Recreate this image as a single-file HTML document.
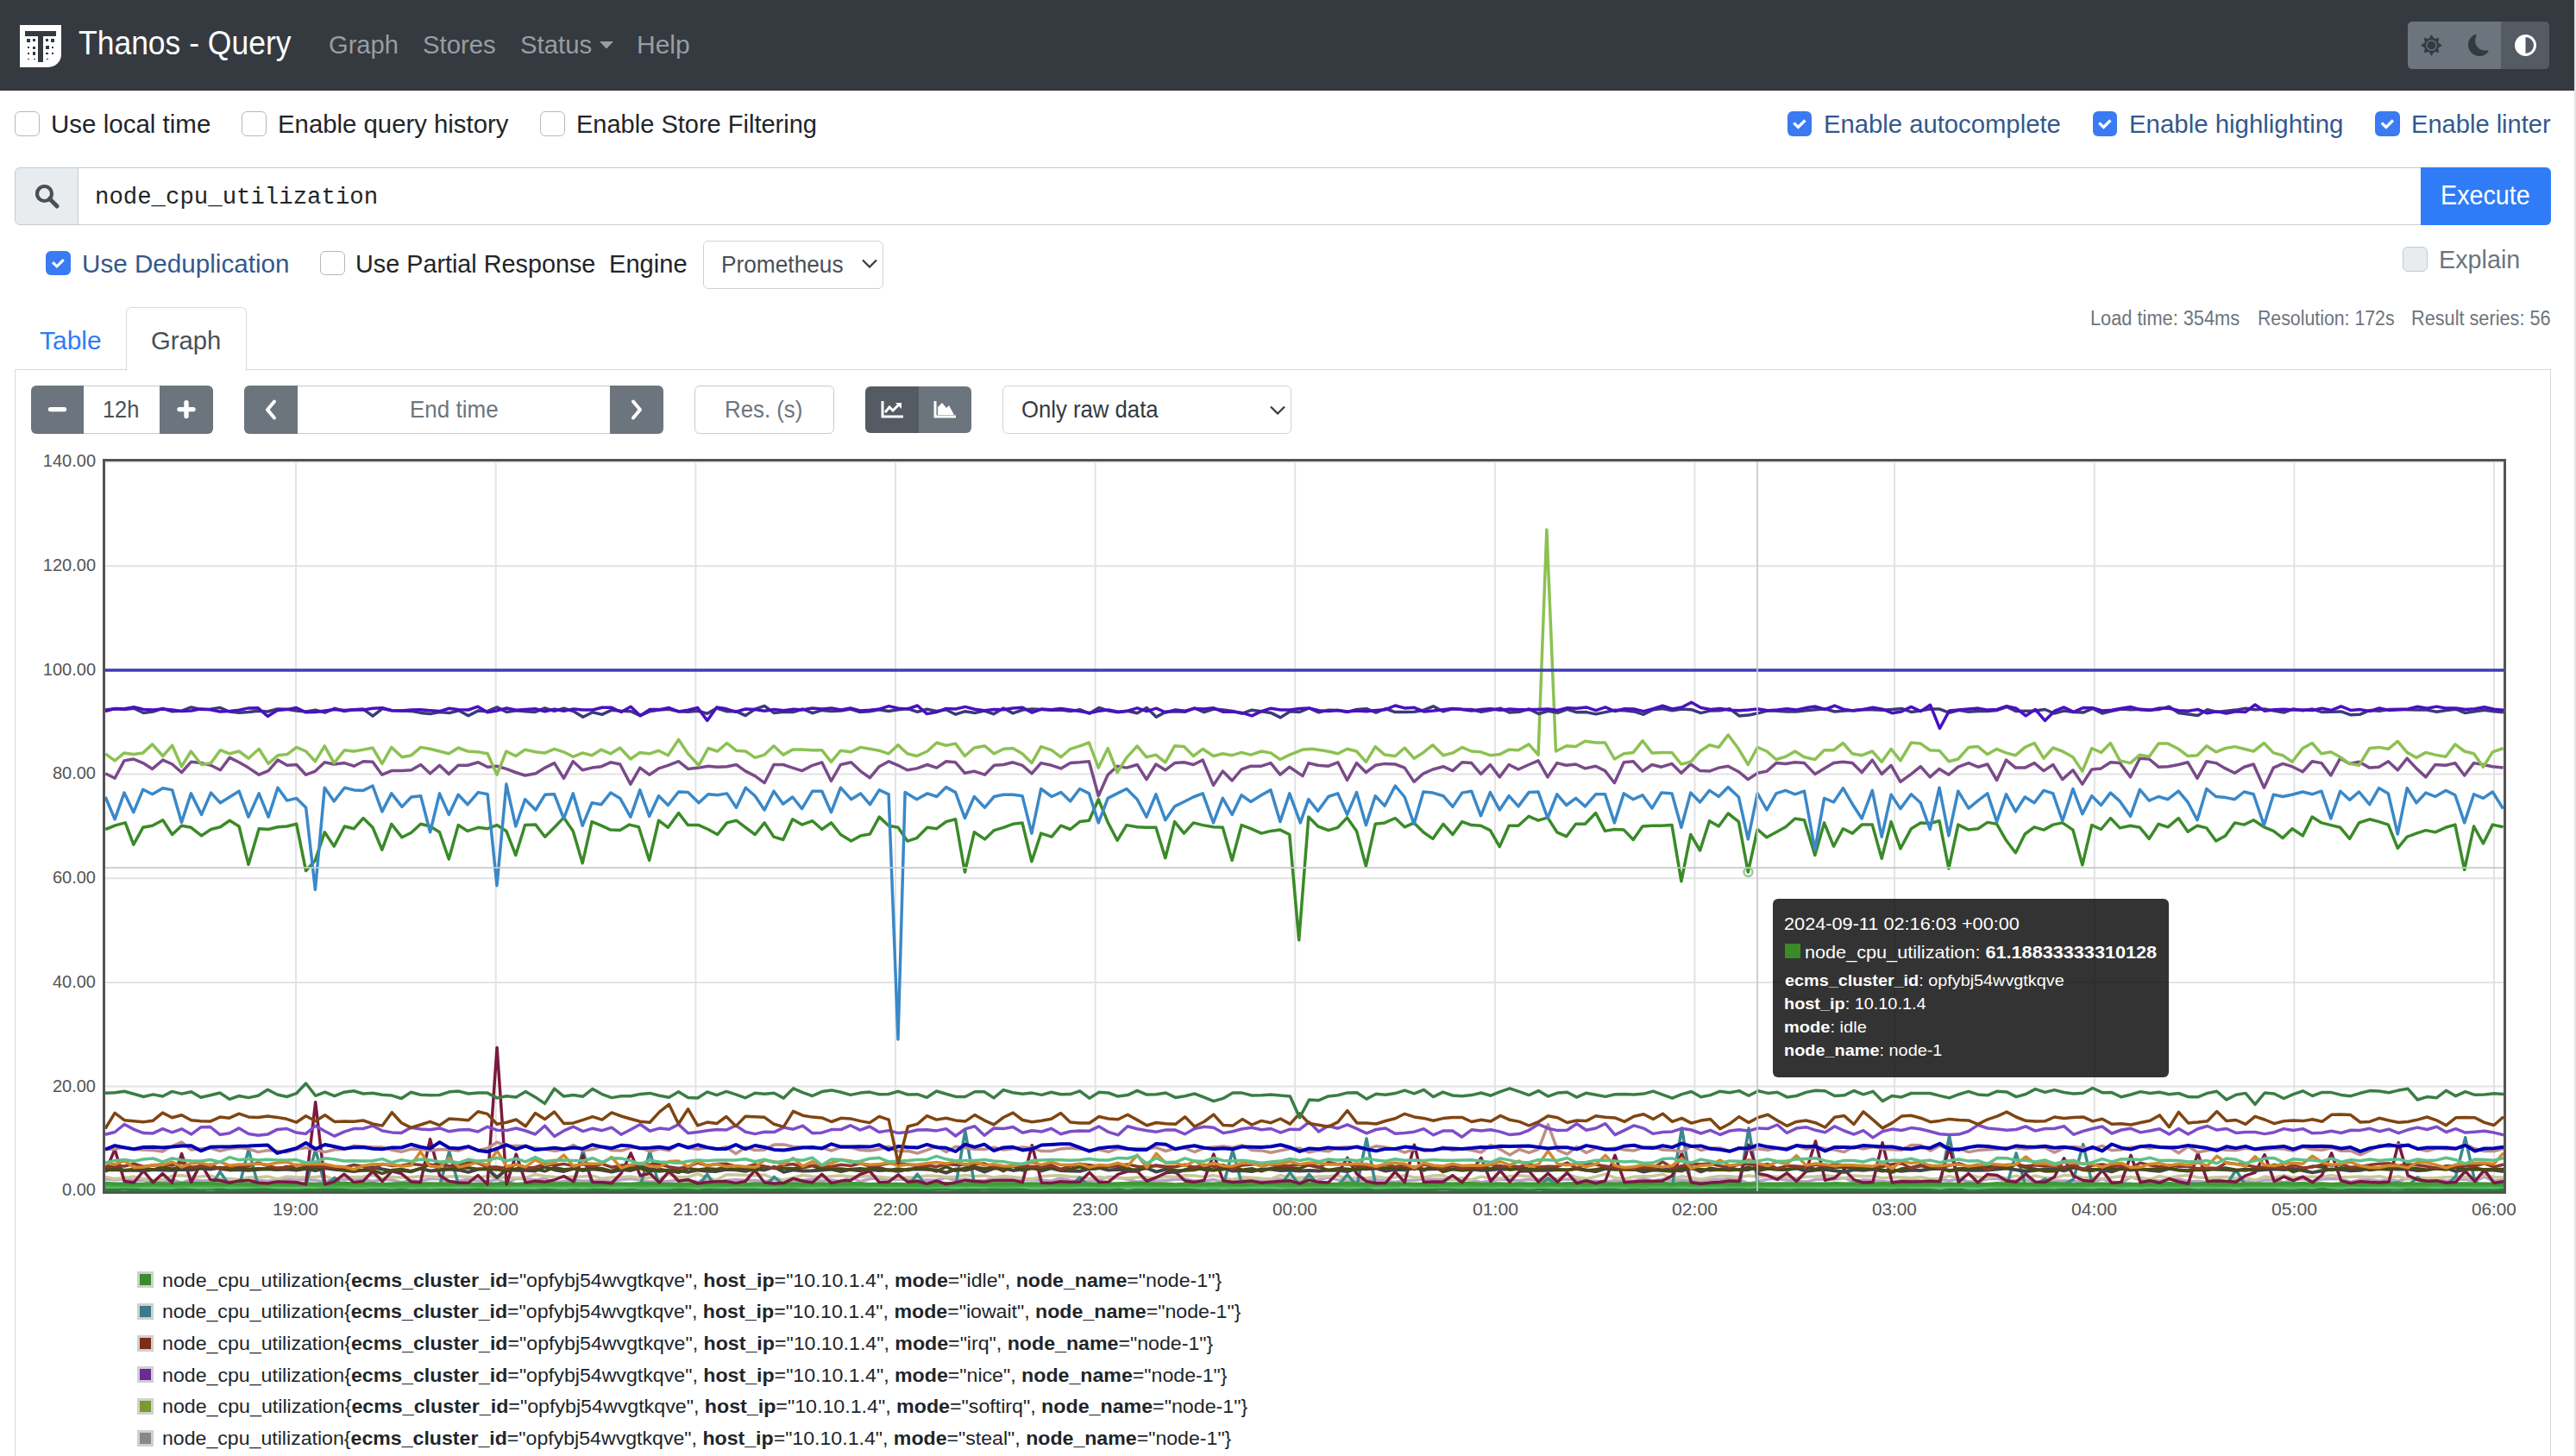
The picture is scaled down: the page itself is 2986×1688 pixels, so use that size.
<!DOCTYPE html>
<html><head><meta charset="utf-8"><style>
html,body{margin:0;padding:0;background:#fff;width:2986px;height:1688px;overflow:hidden;position:relative;font-family:'Liberation Sans', sans-serif}
</style></head><body>
<div style="position:absolute;left:2984px;top:0px;width:2px;height:1688px;box-sizing:border-box;background:#e4e4e4"></div><div style="position:absolute;left:0px;top:0px;width:2984px;height:105px;box-sizing:border-box;background:#343a40;border-bottom:1px solid #2a2e33"></div><svg style="position:absolute;left:23px;top:29px" width="48" height="49" viewBox="0 0 48 49">
<path d="M0 0H48V34A15 15 0 0 1 33 49H0Z" fill="#fff"/>
<rect x="6" y="7" width="36" height="6" fill="#343a40"/>
<rect x="21" y="13" width="6" height="30" fill="#343a40"/>
<g fill="#343a40">
<rect x="8" y="16" width="4" height="4"/><rect x="15" y="16" width="3" height="3"/>
<rect x="30" y="16" width="3" height="3"/><rect x="36" y="16" width="4" height="4"/>
<rect x="9" y="25" width="2" height="2"/><rect x="15" y="25" width="3" height="3"/>
<rect x="30" y="24" width="4" height="4"/><rect x="37" y="25" width="2" height="2"/>
<rect x="9" y="32" width="2" height="2"/><rect x="15" y="31" width="3" height="4"/>
<rect x="30" y="32" width="3" height="2"/><rect x="37" y="32" width="2" height="2"/>
<rect x="9" y="39" width="2" height="1"/><rect x="16" y="39" width="2" height="1"/><rect x="31" y="39" width="2" height="1"/>
</g></svg><svg style="position:absolute;left:695px;top:48px" width="16" height="9"><path d="M0 0H16L8 8.5Z" fill="#9a9da0"/></svg><div style="position:absolute;left:2791px;top:25px;width:108px;height:55px;box-sizing:border-box;background:#6c757d;border-radius:5px 0 0 5px"></div><div style="position:absolute;left:2899px;top:25px;width:56px;height:55px;box-sizing:border-box;background:#545b62;border-radius:0 5px 5px 0"></div><svg style="position:absolute;left:2806px;top:40px" width="25" height="25" viewBox="-12.5 -12.5 25 25"><g fill="#343a40"><polygon points="0.00,-12.50 3.14,-7.58 8.84,-8.84 7.58,-3.14 12.50,0.00 7.58,3.14 8.84,8.84 3.14,7.58 0.00,12.50 -3.14,7.58 -8.84,8.84 -7.58,3.14 -12.50,0.00 -7.58,-3.14 -8.84,-8.84 -3.14,-7.58"/></g><circle r="6.3" fill="#6c757d"/><circle r="5" fill="#343a40"/></svg><svg style="position:absolute;left:2861px;top:40px" width="25" height="25" viewBox="0 0 25 25"><path transform="scale(1.5625)" d="M6 .278a.77.77 0 0 1 .08.858 7.2 7.2 0 0 0-.878 3.46c0 4.021 3.278 7.277 7.318 7.277q.792-.001 1.533-.16a.79.79 0 0 1 .81.316.73.73 0 0 1-.031.893A8.35 8.35 0 0 1 8.344 16C3.734 16 0 12.286 0 7.71 0 4.266 2.114 1.312 5.124.06A.75.75 0 0 1 6 .278" fill="#343a40"/></svg><svg style="position:absolute;left:2915px;top:40px" width="25" height="25" viewBox="0 0 25 25"><circle cx="12.5" cy="12.5" r="11" fill="none" stroke="#fff" stroke-width="3"/><path d="M12.5 1.5A11 11 0 0 0 12.5 23.5Z" fill="#fff"/></svg><div style="position:absolute;left:17px;top:129px;width:29px;height:29px;box-sizing:border-box;background:#fff;border:1.5px solid #b5b9bd;border-radius:6px"></div><div style="position:absolute;left:280px;top:129px;width:29px;height:29px;box-sizing:border-box;background:#fff;border:1.5px solid #b5b9bd;border-radius:6px"></div><div style="position:absolute;left:626px;top:129px;width:29px;height:29px;box-sizing:border-box;background:#fff;border:1.5px solid #b5b9bd;border-radius:6px"></div><div style="position:absolute;left:2072px;top:129px;width:28px;height:29px;box-sizing:border-box;background:#3a7af2;border-radius:6px"></div><svg style="position:absolute;left:2072px;top:129px" width="28" height="29" viewBox="0 0 28 29"><path d="M9.3 17.5L14.4 22.5 22.4 14.5" transform="translate(-2,-4)" fill="none" stroke="#fff" stroke-width="3.2"/></svg><div style="position:absolute;left:2426px;top:129px;width:28px;height:29px;box-sizing:border-box;background:#3a7af2;border-radius:6px"></div><svg style="position:absolute;left:2426px;top:129px" width="28" height="29" viewBox="0 0 28 29"><path d="M9.3 17.5L14.4 22.5 22.4 14.5" transform="translate(-2,-4)" fill="none" stroke="#fff" stroke-width="3.2"/></svg><div style="position:absolute;left:2753px;top:129px;width:29px;height:29px;box-sizing:border-box;background:#3a7af2;border-radius:6px"></div><svg style="position:absolute;left:2753px;top:129px" width="29" height="29" viewBox="0 0 28 29"><path d="M9.3 17.5L14.4 22.5 22.4 14.5" transform="translate(-2,-4)" fill="none" stroke="#fff" stroke-width="3.2"/></svg><div style="position:absolute;left:17px;top:194px;width:74px;height:67px;box-sizing:border-box;background:#e9ecef;border:1px solid #c8cbce;border-radius:6px 0 0 6px"></div><div style="position:absolute;left:90px;top:194px;width:2718px;height:67px;box-sizing:border-box;background:#fff;border:1px solid #c8cbce;border-left:1px solid #c8cbce;border-right:none"></div><svg style="position:absolute;left:40px;top:213px" width="29" height="29" viewBox="0 0 29 29"><circle cx="11.5" cy="11.5" r="8.5" fill="none" stroke="#495057" stroke-width="4.2"/><path d="M17.5 17.5L26 26" stroke="#495057" stroke-width="5" stroke-linecap="round"/></svg><div style="position:absolute;left:2806px;top:194px;width:151px;height:67px;box-sizing:border-box;background:#2f7cf6;border-radius:0 6px 6px 0"></div><div style="position:absolute;left:53px;top:291px;width:29px;height:28px;box-sizing:border-box;background:#3a7af2;border-radius:6px"></div><svg style="position:absolute;left:53px;top:291px" width="29" height="28" viewBox="0 0 28 29"><path d="M9.3 17.5L14.4 22.5 22.4 14.5" transform="translate(-2,-4)" fill="none" stroke="#fff" stroke-width="3.2"/></svg><div style="position:absolute;left:371px;top:291px;width:29px;height:28px;box-sizing:border-box;background:#fff;border:1.5px solid #b5b9bd;border-radius:6px"></div><div style="position:absolute;left:815px;top:279px;width:209px;height:56px;box-sizing:border-box;background:#fff;border:1px solid #cfd2d5;border-radius:6px"></div><svg style="position:absolute;left:999px;top:300px" width="18" height="11"><path d="M1 1.5L9 9.5 17 1.5" fill="none" stroke="#343a40" stroke-width="2.2"/></svg><div style="position:absolute;left:2785px;top:286px;width:29px;height:29px;box-sizing:border-box;background:#e9ecef;border:1.5px solid #c5c9cd;border-radius:6px"></div><div style="position:absolute;left:17px;top:428px;width:2940px;height:1270px;box-sizing:border-box;border:1px solid #d6d9dc;border-bottom:none;border-radius:0"></div><div style="position:absolute;left:146px;top:356px;width:140px;height:74px;box-sizing:border-box;background:#fff;border:1px solid #d6d9dc;border-bottom:none;border-radius:6px 6px 0 0"></div><div style="position:absolute;left:36px;top:447px;width:62px;height:56px;box-sizing:border-box;background:#6c757d;border-radius:6px 0 0 6px"></div><div style="position:absolute;left:97px;top:447px;width:89px;height:56px;box-sizing:border-box;background:#fff;border:1px solid #c8cbce;border-left:none;border-right:none"></div><div style="position:absolute;left:185px;top:447px;width:62px;height:56px;box-sizing:border-box;background:#6c757d;border-radius:0 6px 6px 0"></div><svg style="position:absolute;left:0;top:440px" width="260" height="70"><path d="M58.5 34.6H74.5M208 34.6H224M216 26.6V42.6" stroke="#fff" stroke-width="5.4" stroke-linecap="round"/></svg><div style="position:absolute;left:283px;top:447px;width:62px;height:56px;box-sizing:border-box;background:#6c757d;border-radius:6px 0 0 6px"></div><div style="position:absolute;left:345px;top:447px;width:363px;height:56px;box-sizing:border-box;background:#fff;border:1px solid #c8cbce;border-left:none;border-right:none"></div><div style="position:absolute;left:707px;top:447px;width:62px;height:56px;box-sizing:border-box;background:#6c757d;border-radius:0 6px 6px 0"></div><svg style="position:absolute;left:305px;top:462px" width="18" height="26"><path d="M13 3.5L5 13 13 22.5" fill="none" stroke="#fff" stroke-width="4" stroke-linecap="round" stroke-linejoin="round"/></svg><svg style="position:absolute;left:729px;top:462px" width="18" height="26"><path d="M5 3.5L13 13 5 22.5" fill="none" stroke="#fff" stroke-width="4" stroke-linecap="round" stroke-linejoin="round"/></svg><div style="position:absolute;left:805px;top:447px;width:162px;height:56px;box-sizing:border-box;background:#fff;border:1px solid #c8cbce;border-radius:6px"></div><div style="position:absolute;left:1003px;top:448px;width:62px;height:54px;box-sizing:border-box;background:#545b62;border-radius:6px 0 0 6px"></div><div style="position:absolute;left:1065px;top:448px;width:61px;height:54px;box-sizing:border-box;background:#6c757d;border-radius:0 6px 6px 0"></div><svg style="position:absolute;left:1021px;top:465px" width="26" height="20" viewBox="0 0 26 20"><path d="M2 0V18H26" fill="none" stroke="#fff" stroke-width="3"/><path d="M5 13L10 7 14 11 21 4" fill="none" stroke="#fff" stroke-width="3"/><path d="M17 2H24V9Z" fill="#fff"/></svg><svg style="position:absolute;left:1082px;top:465px" width="26" height="20" viewBox="0 0 26 20"><path d="M2 0V18H26" fill="none" stroke="#fff" stroke-width="3"/><path d="M5 16V7L10 2 15 8 18 5 24 16Z" fill="#fff"/></svg><div style="position:absolute;left:1162px;top:447px;width:335px;height:56px;box-sizing:border-box;background:#fff;border:1px solid #cfd2d5;border-radius:6px"></div><svg style="position:absolute;left:1472px;top:470px" width="18" height="11"><path d="M1 1.5L9 9.5 17 1.5" fill="none" stroke="#343a40" stroke-width="2.2"/></svg><svg style="position:absolute;left:0;top:0" width="2986" height="1688" viewBox="0 0 2986 1688"><line x1="122.0" x2="2902.0" y1="1380.3" y2="1380.3" stroke="#e3e3e3" stroke-width="2"/><line x1="122.0" x2="2902.0" y1="1259.6" y2="1259.6" stroke="#e3e3e3" stroke-width="2"/><line x1="122.0" x2="2902.0" y1="1138.9" y2="1138.9" stroke="#e3e3e3" stroke-width="2"/><line x1="122.0" x2="2902.0" y1="1018.3" y2="1018.3" stroke="#e3e3e3" stroke-width="2"/><line x1="122.0" x2="2902.0" y1="897.6" y2="897.6" stroke="#e3e3e3" stroke-width="2"/><line x1="122.0" x2="2902.0" y1="776.9" y2="776.9" stroke="#e3e3e3" stroke-width="2"/><line x1="122.0" x2="2902.0" y1="656.2" y2="656.2" stroke="#e3e3e3" stroke-width="2"/><line x1="122.0" x2="2902.0" y1="535.5" y2="535.5" stroke="#e3e3e3" stroke-width="2"/><line x1="343.1" x2="343.1" y1="535" y2="1381" stroke="#e3e3e3" stroke-width="2"/><line x1="574.7" x2="574.7" y1="535" y2="1381" stroke="#e3e3e3" stroke-width="2"/><line x1="806.4" x2="806.4" y1="535" y2="1381" stroke="#e3e3e3" stroke-width="2"/><line x1="1038.0" x2="1038.0" y1="535" y2="1381" stroke="#e3e3e3" stroke-width="2"/><line x1="1269.6" x2="1269.6" y1="535" y2="1381" stroke="#e3e3e3" stroke-width="2"/><line x1="1501.2" x2="1501.2" y1="535" y2="1381" stroke="#e3e3e3" stroke-width="2"/><line x1="1732.9" x2="1732.9" y1="535" y2="1381" stroke="#e3e3e3" stroke-width="2"/><line x1="1964.5" x2="1964.5" y1="535" y2="1381" stroke="#e3e3e3" stroke-width="2"/><line x1="2196.1" x2="2196.1" y1="535" y2="1381" stroke="#e3e3e3" stroke-width="2"/><line x1="2427.8" x2="2427.8" y1="535" y2="1381" stroke="#e3e3e3" stroke-width="2"/><line x1="2659.4" x2="2659.4" y1="535" y2="1381" stroke="#e3e3e3" stroke-width="2"/><line x1="2891.0" x2="2891.0" y1="535" y2="1381" stroke="#e3e3e3" stroke-width="2"/><polyline points="122.0,1367.0 133.1,1367.7 144.2,1367.0 155.2,1368.2 166.3,1368.2 177.4,1370.6 188.5,1370.7 199.5,1367.8 210.6,1371.1 221.7,1367.3 232.8,1368.9 243.8,1368.8 254.9,1369.8 266.0,1368.9 277.1,1369.3 288.1,1368.5 299.2,1368.6 310.3,1369.2 321.4,1368.6 332.4,1367.2 343.5,1368.3 354.6,1367.3 365.7,1368.2 376.7,1370.5 387.8,1366.3 398.9,1367.9 410.0,1366.3 421.0,1367.2 432.1,1369.8 443.2,1367.2 454.3,1368.0 465.3,1370.8 476.4,1368.7 487.5,1369.4 498.6,1366.6 509.6,1367.1 520.7,1371.3 531.8,1368.9 542.9,1367.5 554.0,1368.9 565.0,1370.2 576.1,1367.0 587.2,1371.7 598.3,1366.3 609.3,1366.7 620.4,1368.1 631.5,1366.2 642.6,1371.3 653.6,1369.4 664.7,1368.3 675.8,1369.3 686.9,1369.0 697.9,1368.7 709.0,1369.5 720.1,1367.5 731.2,1366.4 742.2,1368.0 753.3,1370.0 764.4,1369.9 775.5,1369.3 786.5,1368.4 797.6,1368.3 808.7,1370.4 819.8,1366.0 830.8,1370.9 841.9,1368.4 853.0,1367.8 864.1,1368.3 875.1,1368.5 886.2,1370.0 897.3,1367.2 908.4,1368.2 919.5,1369.9 930.5,1368.2 941.6,1367.3 952.7,1369.3 963.8,1367.9 974.8,1369.7 985.9,1364.3 997.0,1369.7 1008.1,1366.8 1019.1,1365.9 1030.2,1367.2 1041.3,1367.3 1052.4,1367.0 1063.4,1369.3 1074.5,1368.1 1085.6,1368.2 1096.7,1365.3 1107.7,1368.5 1118.8,1366.9 1129.9,1368.5 1141.0,1369.0 1152.0,1366.1 1163.1,1366.3 1174.2,1367.6 1185.3,1367.7 1196.3,1367.4 1207.4,1368.2 1218.5,1369.3 1229.6,1366.0 1240.6,1368.4 1251.7,1370.0 1262.8,1369.5 1273.9,1368.0 1284.9,1364.4 1296.0,1365.0 1307.1,1367.4 1318.2,1370.2 1329.3,1368.7 1340.3,1369.7 1351.4,1368.6 1362.5,1367.5 1373.6,1367.0 1384.6,1369.1 1395.7,1369.2 1406.8,1367.6 1417.9,1370.5 1428.9,1367.6 1440.0,1368.1 1451.1,1367.2 1462.2,1369.8 1473.2,1367.0 1484.3,1366.9 1495.4,1370.5 1506.5,1369.0 1517.5,1371.7 1528.6,1367.7 1539.7,1365.1 1550.8,1367.9 1561.8,1368.6 1572.9,1369.6 1584.0,1367.6 1595.1,1367.7 1606.1,1368.9 1617.2,1370.4 1628.3,1368.8 1639.4,1368.3 1650.4,1366.8 1661.5,1367.2 1672.6,1367.3 1683.7,1367.4 1694.7,1367.2 1705.8,1368.1 1716.9,1370.8 1728.0,1369.1 1739.1,1367.0 1750.1,1368.1 1761.2,1368.8 1772.3,1367.3 1783.4,1368.3 1794.4,1368.2 1805.5,1367.8 1816.6,1367.1 1827.7,1367.4 1838.7,1369.2 1849.8,1369.2 1860.9,1370.6 1872.0,1368.8 1883.0,1369.7 1894.1,1369.0 1905.2,1366.5 1916.3,1369.1 1927.3,1367.2 1938.4,1368.6 1949.5,1367.9 1960.6,1369.4 1971.6,1369.2 1982.7,1367.0 1993.8,1367.7 2004.9,1366.6 2015.9,1367.5 2027.0,1372.1 2038.1,1369.5 2049.2,1367.1 2060.2,1366.6 2071.3,1367.9 2082.4,1369.3 2093.5,1370.1 2104.5,1367.6 2115.6,1367.0 2126.7,1367.2 2137.8,1365.5 2148.9,1370.1 2159.9,1368.0 2171.0,1368.4 2182.1,1369.4 2193.2,1370.4 2204.2,1368.7 2215.3,1367.2 2226.4,1368.9 2237.5,1369.5 2248.5,1367.1 2259.6,1368.9 2270.7,1366.7 2281.8,1370.0 2292.8,1370.0 2303.9,1366.7 2315.0,1366.3 2326.1,1369.6 2337.1,1368.4 2348.2,1367.5 2359.3,1370.3 2370.4,1369.7 2381.4,1369.1 2392.5,1368.9 2403.6,1369.6 2414.7,1370.2 2425.7,1370.0 2436.8,1366.8 2447.9,1370.0 2459.0,1371.6 2470.0,1364.5 2481.1,1367.8 2492.2,1368.4 2503.3,1369.0 2514.4,1367.5 2525.4,1367.0 2536.5,1369.7 2547.6,1369.5 2558.7,1370.8 2569.7,1366.7 2580.8,1370.2 2591.9,1368.5 2603.0,1369.1 2614.0,1371.0 2625.1,1367.9 2636.2,1367.7 2647.3,1371.0 2658.3,1367.7 2669.4,1366.8 2680.5,1369.4 2691.6,1367.0 2702.6,1366.5 2713.7,1366.8 2724.8,1370.3 2735.9,1368.0 2746.9,1367.8 2758.0,1369.3 2769.1,1368.0 2780.2,1369.3 2791.2,1366.0 2802.3,1368.0 2813.4,1370.2 2824.5,1366.2 2835.5,1369.4 2846.6,1367.4 2857.7,1367.0 2868.8,1369.6 2879.8,1364.1 2890.9,1369.3 2902.0,1367.7" fill="none" stroke="#c09ccc" stroke-width="3.5" stroke-linejoin="round" opacity="1.0"/><polyline points="122.0,1364.4 133.1,1366.8 144.2,1365.5 155.2,1364.1 166.3,1366.4 177.4,1368.2 188.5,1367.3 199.5,1363.3 210.6,1362.8 221.7,1364.2 232.8,1364.1 243.8,1362.9 254.9,1366.9 266.0,1366.5 277.1,1367.6 288.1,1365.0 299.2,1365.0 310.3,1363.9 321.4,1366.9 332.4,1364.1 343.5,1364.7 354.6,1365.0 365.7,1364.6 376.7,1363.5 387.8,1367.6 398.9,1364.1 410.0,1364.7 421.0,1364.2 432.1,1362.2 443.2,1366.4 454.3,1364.6 465.3,1365.0 476.4,1364.7 487.5,1363.7 498.6,1363.9 509.6,1365.0 520.7,1363.9 531.8,1363.8 542.9,1364.4 554.0,1365.6 565.0,1363.3 576.1,1364.7 587.2,1365.2 598.3,1365.4 609.3,1365.4 620.4,1361.7 631.5,1363.5 642.6,1364.6 653.6,1364.9 664.7,1364.2 675.8,1364.1 686.9,1363.2 697.9,1366.6 709.0,1364.9 720.1,1365.1 731.2,1363.9 742.2,1365.9 753.3,1365.1 764.4,1366.9 775.5,1361.3 786.5,1364.8 797.6,1364.7 808.7,1360.8 819.8,1365.7 830.8,1367.9 841.9,1361.9 853.0,1361.9 864.1,1362.5 875.1,1363.1 886.2,1362.0 897.3,1366.3 908.4,1368.0 919.5,1365.3 930.5,1362.5 941.6,1363.9 952.7,1364.9 963.8,1363.8 974.8,1362.8 985.9,1364.3 997.0,1364.2 1008.1,1363.2 1019.1,1364.5 1030.2,1365.6 1041.3,1366.0 1052.4,1364.9 1063.4,1364.8 1074.5,1363.0 1085.6,1363.5 1096.7,1364.5 1107.7,1364.4 1118.8,1362.6 1129.9,1363.8 1141.0,1362.9 1152.0,1365.1 1163.1,1363.6 1174.2,1364.6 1185.3,1365.7 1196.3,1367.0 1207.4,1364.1 1218.5,1363.0 1229.6,1362.8 1240.6,1364.2 1251.7,1364.5 1262.8,1366.4 1273.9,1364.4 1284.9,1365.7 1296.0,1365.5 1307.1,1366.1 1318.2,1365.1 1329.3,1365.0 1340.3,1366.6 1351.4,1364.0 1362.5,1364.4 1373.6,1362.7 1384.6,1363.1 1395.7,1364.4 1406.8,1362.6 1417.9,1365.4 1428.9,1367.7 1440.0,1364.7 1451.1,1365.2 1462.2,1366.3 1473.2,1366.8 1484.3,1362.4 1495.4,1366.2 1506.5,1365.3 1517.5,1365.2 1528.6,1364.0 1539.7,1363.9 1550.8,1362.7 1561.8,1367.1 1572.9,1365.2 1584.0,1366.0 1595.1,1364.1 1606.1,1365.7 1617.2,1365.0 1628.3,1362.5 1639.4,1365.1 1650.4,1365.2 1661.5,1362.9 1672.6,1362.6 1683.7,1367.7 1694.7,1365.6 1705.8,1367.6 1716.9,1364.1 1728.0,1366.0 1739.1,1366.1 1750.1,1363.8 1761.2,1362.7 1772.3,1364.0 1783.4,1367.1 1794.4,1365.5 1805.5,1366.8 1816.6,1361.1 1827.7,1364.8 1838.7,1366.6 1849.8,1364.1 1860.9,1361.1 1872.0,1365.5 1883.0,1366.6 1894.1,1364.3 1905.2,1363.7 1916.3,1363.5 1927.3,1361.4 1938.4,1366.8 1949.5,1363.8 1960.6,1365.6 1971.6,1367.2 1982.7,1364.9 1993.8,1363.6 2004.9,1363.8 2015.9,1364.8 2027.0,1363.1 2038.1,1364.6 2049.2,1363.3 2060.2,1364.4 2071.3,1364.5 2082.4,1366.1 2093.5,1364.2 2104.5,1364.1 2115.6,1362.7 2126.7,1364.0 2137.8,1366.1 2148.9,1362.9 2159.9,1363.7 2171.0,1363.7 2182.1,1365.9 2193.2,1365.1 2204.2,1365.0 2215.3,1365.7 2226.4,1364.6 2237.5,1366.8 2248.5,1366.6 2259.6,1363.4 2270.7,1366.5 2281.8,1361.8 2292.8,1364.7 2303.9,1365.8 2315.0,1363.4 2326.1,1366.3 2337.1,1363.1 2348.2,1366.4 2359.3,1363.0 2370.4,1365.6 2381.4,1366.0 2392.5,1362.6 2403.6,1363.0 2414.7,1365.4 2425.7,1365.0 2436.8,1366.6 2447.9,1365.1 2459.0,1363.7 2470.0,1365.3 2481.1,1365.2 2492.2,1367.1 2503.3,1363.8 2514.4,1365.8 2525.4,1363.5 2536.5,1362.6 2547.6,1365.0 2558.7,1365.6 2569.7,1364.9 2580.8,1364.6 2591.9,1366.1 2603.0,1365.4 2614.0,1368.3 2625.1,1364.1 2636.2,1365.5 2647.3,1362.6 2658.3,1365.6 2669.4,1364.4 2680.5,1364.2 2691.6,1364.6 2702.6,1362.6 2713.7,1364.8 2724.8,1364.6 2735.9,1364.1 2746.9,1364.8 2758.0,1363.7 2769.1,1366.1 2780.2,1363.8 2791.2,1367.2 2802.3,1365.1 2813.4,1366.0 2824.5,1365.6 2835.5,1364.7 2846.6,1364.6 2857.7,1364.3 2868.8,1366.8 2879.8,1362.2 2890.9,1364.7 2902.0,1365.1" fill="none" stroke="#c8c89a" stroke-width="3.5" stroke-linejoin="round" opacity="1.0"/><polyline points="122.0,1372.9 133.1,1373.6 144.2,1374.6 155.2,1376.5 166.3,1375.2 177.4,1376.9 188.5,1374.4 199.5,1375.2 210.6,1375.4 221.7,1374.1 232.8,1374.9 243.8,1375.9 254.9,1358.6 266.0,1374.1 277.1,1376.0 288.1,1332.6 299.2,1374.4 310.3,1375.7 321.4,1376.2 332.4,1372.3 343.5,1372.8 354.6,1374.3 365.7,1332.6 376.7,1374.5 387.8,1365.4 398.9,1376.3 410.0,1375.3 421.0,1376.5 432.1,1372.1 443.2,1375.8 454.3,1373.0 465.3,1375.0 476.4,1376.7 487.5,1373.4 498.6,1375.1 509.6,1374.8 520.7,1335.0 531.8,1374.8 542.9,1375.6 554.0,1374.7 565.0,1375.6 576.1,1376.2 587.2,1370.7 598.3,1375.6 609.3,1374.1 620.4,1374.5 631.5,1375.1 642.6,1375.4 653.6,1376.7 664.7,1374.0 675.8,1333.8 686.9,1374.8 697.9,1374.6 709.0,1376.0 720.1,1374.1 731.2,1375.4 742.2,1375.0 753.3,1335.0 764.4,1376.1 775.5,1376.1 786.5,1374.2 797.6,1374.3 808.7,1375.2 819.8,1361.4 830.8,1377.1 841.9,1376.0 853.0,1374.5 864.1,1378.1 875.1,1376.1 886.2,1376.3 897.3,1364.4 908.4,1373.5 919.5,1373.7 930.5,1375.4 941.6,1377.8 952.7,1373.9 963.8,1373.6 974.8,1372.8 985.9,1376.4 997.0,1372.7 1008.1,1375.8 1019.1,1376.0 1030.2,1375.3 1041.3,1376.8 1052.4,1375.0 1063.4,1361.2 1074.5,1375.8 1085.6,1374.7 1096.7,1376.2 1107.7,1375.6 1118.8,1310.9 1129.9,1375.2 1141.0,1374.3 1152.0,1373.7 1163.1,1372.9 1174.2,1374.2 1185.3,1373.6 1196.3,1375.9 1207.4,1375.2 1218.5,1375.1 1229.6,1372.1 1240.6,1375.0 1251.7,1365.0 1262.8,1375.2 1273.9,1374.9 1284.9,1373.4 1296.0,1375.7 1307.1,1373.5 1318.2,1373.6 1329.3,1374.6 1340.3,1373.1 1351.4,1374.0 1362.5,1374.7 1373.6,1374.8 1384.6,1374.0 1395.7,1375.4 1406.8,1375.5 1417.9,1374.5 1428.9,1333.8 1440.0,1374.2 1451.1,1374.4 1462.2,1374.6 1473.2,1373.9 1484.3,1373.6 1495.4,1359.5 1506.5,1374.4 1517.5,1361.3 1528.6,1374.1 1539.7,1373.3 1550.8,1375.2 1561.8,1361.5 1572.9,1375.1 1584.0,1320.0 1595.1,1376.3 1606.1,1374.9 1617.2,1376.0 1628.3,1374.9 1639.4,1373.4 1650.4,1377.4 1661.5,1374.3 1672.6,1374.6 1683.7,1374.9 1694.7,1374.2 1705.8,1374.9 1716.9,1374.6 1728.0,1376.1 1739.1,1373.1 1750.1,1375.7 1761.2,1373.9 1772.3,1375.9 1783.4,1375.6 1794.4,1366.0 1805.5,1375.1 1816.6,1376.5 1827.7,1375.1 1838.7,1375.4 1849.8,1373.9 1860.9,1374.5 1872.0,1375.3 1883.0,1376.5 1894.1,1377.0 1905.2,1375.5 1916.3,1374.2 1927.3,1373.4 1938.4,1375.6 1949.5,1307.9 1960.6,1375.8 1971.6,1374.8 1982.7,1373.5 1993.8,1375.1 2004.9,1374.8 2015.9,1377.7 2027.0,1307.9 2038.1,1374.6 2049.2,1374.3 2060.2,1374.1 2071.3,1376.1 2082.4,1373.8 2093.5,1376.1 2104.5,1374.9 2115.6,1372.4 2126.7,1374.4 2137.8,1375.9 2148.9,1375.7 2159.9,1374.8 2171.0,1376.2 2182.1,1374.6 2193.2,1374.6 2204.2,1374.8 2215.3,1376.4 2226.4,1377.0 2237.5,1375.1 2248.5,1375.1 2259.6,1316.9 2270.7,1375.2 2281.8,1375.0 2292.8,1374.3 2303.9,1375.4 2315.0,1373.8 2326.1,1374.8 2337.1,1336.9 2348.2,1375.8 2359.3,1373.3 2370.4,1366.9 2381.4,1376.0 2392.5,1373.3 2403.6,1367.1 2414.7,1326.6 2425.7,1375.2 2436.8,1375.7 2447.9,1375.6 2459.0,1373.1 2470.0,1372.6 2481.1,1376.5 2492.2,1375.6 2503.3,1372.6 2514.4,1376.8 2525.4,1374.7 2536.5,1373.3 2547.6,1374.9 2558.7,1375.6 2569.7,1375.1 2580.8,1373.8 2591.9,1356.5 2603.0,1374.4 2614.0,1374.9 2625.1,1374.1 2636.2,1376.6 2647.3,1374.9 2658.3,1375.9 2669.4,1374.4 2680.5,1375.2 2691.6,1374.5 2702.6,1373.6 2713.7,1376.4 2724.8,1374.7 2735.9,1374.4 2746.9,1375.8 2758.0,1373.3 2769.1,1372.2 2780.2,1371.1 2791.2,1374.9 2802.3,1364.9 2813.4,1375.1 2824.5,1375.6 2835.5,1374.7 2846.6,1363.8 2857.7,1318.8 2868.8,1369.9 2879.8,1377.0 2890.9,1373.5 2902.0,1372.6" fill="none" stroke="#3a8a8a" stroke-width="3.5" stroke-linejoin="round" opacity="1.0"/><polyline points="122.0,1377.9 133.1,1377.9 144.2,1378.1 155.2,1378.7 166.3,1378.2 177.4,1378.6 188.5,1378.1 199.5,1378.6 210.6,1377.8 221.7,1378.0 232.8,1377.4 243.8,1377.9 254.9,1377.9 266.0,1378.3 277.1,1378.4 288.1,1377.6 299.2,1378.1 310.3,1378.0 321.4,1378.1 332.4,1377.9 343.5,1378.8 354.6,1378.9 365.7,1378.0 376.7,1377.3 387.8,1378.9 398.9,1378.5 410.0,1378.1 421.0,1378.4 432.1,1378.3 443.2,1378.3 454.3,1377.8 465.3,1378.2 476.4,1378.1 487.5,1378.7 498.6,1377.9 509.6,1377.5 520.7,1378.0 531.8,1378.3 542.9,1378.7 554.0,1378.0 565.0,1378.0 576.1,1378.3 587.2,1379.1 598.3,1378.5 609.3,1378.6 620.4,1378.6 631.5,1378.1 642.6,1378.6 653.6,1378.3 664.7,1377.7 675.8,1378.5 686.9,1378.2 697.9,1378.0 709.0,1378.5 720.1,1378.8 731.2,1378.1 742.2,1377.9 753.3,1378.9 764.4,1378.3 775.5,1378.4 786.5,1377.7 797.6,1378.8 808.7,1378.3 819.8,1378.8 830.8,1378.6 841.9,1378.2 853.0,1378.4 864.1,1378.3 875.1,1378.5 886.2,1378.8 897.3,1377.9 908.4,1377.7 919.5,1378.2 930.5,1378.4 941.6,1377.7 952.7,1378.0 963.8,1378.1 974.8,1377.9 985.9,1378.6 997.0,1378.6 1008.1,1378.2 1019.1,1378.7 1030.2,1378.2 1041.3,1378.1 1052.4,1378.0 1063.4,1378.0 1074.5,1378.8 1085.6,1378.3 1096.7,1378.1 1107.7,1377.8 1118.8,1377.9 1129.9,1378.3 1141.0,1378.3 1152.0,1378.7 1163.1,1378.4 1174.2,1378.5 1185.3,1378.7 1196.3,1378.3 1207.4,1377.8 1218.5,1377.6 1229.6,1378.1 1240.6,1378.3 1251.7,1378.1 1262.8,1377.9 1273.9,1378.0 1284.9,1378.1 1296.0,1378.3 1307.1,1378.3 1318.2,1377.4 1329.3,1377.8 1340.3,1378.6 1351.4,1377.9 1362.5,1378.5 1373.6,1378.1 1384.6,1378.4 1395.7,1378.1 1406.8,1378.4 1417.9,1378.3 1428.9,1378.0 1440.0,1378.0 1451.1,1378.9 1462.2,1377.8 1473.2,1379.0 1484.3,1378.8 1495.4,1378.4 1506.5,1378.0 1517.5,1378.2 1528.6,1378.4 1539.7,1377.8 1550.8,1378.2 1561.8,1378.2 1572.9,1377.9 1584.0,1378.5 1595.1,1377.4 1606.1,1377.7 1617.2,1378.2 1628.3,1378.2 1639.4,1378.1 1650.4,1377.9 1661.5,1378.0 1672.6,1378.5 1683.7,1378.6 1694.7,1377.8 1705.8,1378.7 1716.9,1378.5 1728.0,1377.8 1739.1,1378.7 1750.1,1378.0 1761.2,1377.8 1772.3,1377.3 1783.4,1377.7 1794.4,1378.1 1805.5,1378.6 1816.6,1377.7 1827.7,1377.7 1838.7,1377.6 1849.8,1377.6 1860.9,1378.2 1872.0,1378.3 1883.0,1378.6 1894.1,1378.0 1905.2,1377.9 1916.3,1378.4 1927.3,1378.1 1938.4,1377.8 1949.5,1377.6 1960.6,1378.5 1971.6,1378.3 1982.7,1378.5 1993.8,1378.6 2004.9,1377.9 2015.9,1377.8 2027.0,1378.3 2038.1,1378.3 2049.2,1378.4 2060.2,1377.5 2071.3,1378.4 2082.4,1378.3 2093.5,1378.5 2104.5,1377.9 2115.6,1378.4 2126.7,1378.9 2137.8,1378.1 2148.9,1378.1 2159.9,1378.3 2171.0,1378.2 2182.1,1378.1 2193.2,1378.0 2204.2,1377.8 2215.3,1377.9 2226.4,1377.8 2237.5,1377.9 2248.5,1378.0 2259.6,1378.2 2270.7,1378.2 2281.8,1378.7 2292.8,1377.8 2303.9,1377.4 2315.0,1378.2 2326.1,1378.5 2337.1,1378.1 2348.2,1378.3 2359.3,1377.8 2370.4,1378.8 2381.4,1377.6 2392.5,1377.7 2403.6,1378.0 2414.7,1379.0 2425.7,1378.3 2436.8,1377.6 2447.9,1378.1 2459.0,1378.5 2470.0,1378.1 2481.1,1378.2 2492.2,1378.6 2503.3,1378.2 2514.4,1377.8 2525.4,1377.8 2536.5,1377.8 2547.6,1378.1 2558.7,1378.4 2569.7,1378.2 2580.8,1377.4 2591.9,1378.0 2603.0,1377.9 2614.0,1378.6 2625.1,1377.8 2636.2,1378.1 2647.3,1377.6 2658.3,1378.3 2669.4,1378.2 2680.5,1378.3 2691.6,1378.4 2702.6,1378.3 2713.7,1378.1 2724.8,1378.2 2735.9,1378.1 2746.9,1377.5 2758.0,1378.0 2769.1,1378.0 2780.2,1378.4 2791.2,1377.5 2802.3,1378.5 2813.4,1379.0 2824.5,1378.1 2835.5,1378.0 2846.6,1378.5 2857.7,1377.7 2868.8,1378.8 2879.8,1378.8 2890.9,1378.2 2902.0,1378.3" fill="none" stroke="#4a7a9a" stroke-width="4" stroke-linejoin="round" opacity="1.0"/><polyline points="122.0,1379.6 133.1,1379.5 144.2,1378.6 155.2,1379.6 166.3,1379.9 177.4,1379.3 188.5,1379.3 199.5,1379.1 210.6,1379.5 221.7,1378.9 232.8,1379.2 243.8,1378.5 254.9,1379.2 266.0,1379.3 277.1,1378.9 288.1,1379.1 299.2,1379.7 310.3,1379.1 321.4,1379.6 332.4,1378.9 343.5,1379.6 354.6,1379.3 365.7,1379.7 376.7,1379.3 387.8,1378.9 398.9,1379.0 410.0,1379.6 421.0,1379.9 432.1,1379.1 443.2,1379.6 454.3,1379.7 465.3,1379.1 476.4,1379.8 487.5,1379.1 498.6,1379.0 509.6,1379.4 520.7,1379.7 531.8,1379.5 542.9,1378.8 554.0,1379.3 565.0,1378.9 576.1,1379.4 587.2,1379.3 598.3,1379.3 609.3,1379.3 620.4,1379.3 631.5,1379.1 642.6,1378.9 653.6,1379.4 664.7,1379.7 675.8,1379.6 686.9,1379.7 697.9,1380.1 709.0,1379.4 720.1,1379.7 731.2,1378.7 742.2,1379.6 753.3,1379.9 764.4,1379.2 775.5,1379.4 786.5,1379.1 797.6,1379.3 808.7,1378.7 819.8,1379.6 830.8,1379.3 841.9,1379.5 853.0,1379.6 864.1,1380.0 875.1,1379.2 886.2,1380.0 897.3,1379.3 908.4,1379.2 919.5,1379.2 930.5,1380.0 941.6,1379.1 952.7,1379.6 963.8,1379.2 974.8,1379.5 985.9,1378.7 997.0,1379.6 1008.1,1379.5 1019.1,1379.3 1030.2,1379.9 1041.3,1379.6 1052.4,1379.5 1063.4,1379.3 1074.5,1379.5 1085.6,1378.7 1096.7,1378.7 1107.7,1378.9 1118.8,1379.4 1129.9,1379.2 1141.0,1378.6 1152.0,1378.7 1163.1,1379.1 1174.2,1379.6 1185.3,1379.0 1196.3,1379.1 1207.4,1379.4 1218.5,1379.4 1229.6,1379.9 1240.6,1379.9 1251.7,1379.8 1262.8,1379.3 1273.9,1379.3 1284.9,1379.6 1296.0,1379.5 1307.1,1378.9 1318.2,1379.8 1329.3,1379.5 1340.3,1379.8 1351.4,1378.7 1362.5,1379.5 1373.6,1378.9 1384.6,1379.1 1395.7,1379.6 1406.8,1379.2 1417.9,1379.3 1428.9,1379.2 1440.0,1379.3 1451.1,1379.2 1462.2,1379.2 1473.2,1379.7 1484.3,1379.1 1495.4,1379.7 1506.5,1379.9 1517.5,1379.5 1528.6,1379.7 1539.7,1379.6 1550.8,1379.8 1561.8,1379.1 1572.9,1379.1 1584.0,1379.6 1595.1,1378.9 1606.1,1379.4 1617.2,1379.7 1628.3,1379.8 1639.4,1379.2 1650.4,1379.4 1661.5,1379.3 1672.6,1378.3 1683.7,1379.0 1694.7,1379.4 1705.8,1379.8 1716.9,1379.5 1728.0,1379.6 1739.1,1379.6 1750.1,1380.3 1761.2,1379.3 1772.3,1379.8 1783.4,1378.6 1794.4,1379.5 1805.5,1379.0 1816.6,1379.3 1827.7,1379.7 1838.7,1379.3 1849.8,1379.5 1860.9,1379.5 1872.0,1379.4 1883.0,1380.1 1894.1,1378.9 1905.2,1379.2 1916.3,1379.4 1927.3,1378.9 1938.4,1379.8 1949.5,1380.3 1960.6,1379.3 1971.6,1379.7 1982.7,1379.4 1993.8,1379.6 2004.9,1379.5 2015.9,1379.8 2027.0,1379.4 2038.1,1379.1 2049.2,1379.3 2060.2,1378.8 2071.3,1379.2 2082.4,1379.2 2093.5,1379.3 2104.5,1379.2 2115.6,1379.5 2126.7,1379.9 2137.8,1379.8 2148.9,1380.1 2159.9,1379.5 2171.0,1379.4 2182.1,1379.2 2193.2,1379.0 2204.2,1379.6 2215.3,1380.2 2226.4,1379.7 2237.5,1379.4 2248.5,1380.1 2259.6,1379.9 2270.7,1379.8 2281.8,1378.7 2292.8,1379.0 2303.9,1379.7 2315.0,1379.6 2326.1,1379.4 2337.1,1379.3 2348.2,1379.3 2359.3,1379.8 2370.4,1379.8 2381.4,1378.9 2392.5,1379.4 2403.6,1379.0 2414.7,1379.4 2425.7,1379.3 2436.8,1379.3 2447.9,1379.5 2459.0,1379.0 2470.0,1379.1 2481.1,1379.4 2492.2,1379.3 2503.3,1378.8 2514.4,1379.7 2525.4,1379.1 2536.5,1379.0 2547.6,1378.8 2558.7,1378.9 2569.7,1379.7 2580.8,1379.1 2591.9,1379.5 2603.0,1379.1 2614.0,1379.3 2625.1,1379.1 2636.2,1379.6 2647.3,1379.3 2658.3,1379.2 2669.4,1379.2 2680.5,1379.1 2691.6,1378.7 2702.6,1379.7 2713.7,1379.4 2724.8,1380.0 2735.9,1379.2 2746.9,1378.8 2758.0,1379.3 2769.1,1379.0 2780.2,1378.6 2791.2,1379.2 2802.3,1379.1 2813.4,1379.0 2824.5,1379.7 2835.5,1379.8 2846.6,1379.5 2857.7,1379.7 2868.8,1379.2 2879.8,1380.2 2890.9,1380.1 2902.0,1380.1" fill="none" stroke="#2e7d32" stroke-width="4" stroke-linejoin="round" opacity="1.0"/><polyline points="122.0,1375.8 133.1,1375.7 144.2,1375.8 155.2,1375.6 166.3,1376.4 177.4,1376.3 188.5,1376.4 199.5,1376.4 210.6,1375.6 221.7,1376.0 232.8,1376.4 243.8,1376.4 254.9,1375.6 266.0,1376.5 277.1,1376.3 288.1,1375.9 299.2,1375.6 310.3,1375.6 321.4,1376.3 332.4,1376.5 343.5,1376.5 354.6,1375.9 365.7,1376.0 376.7,1375.6 387.8,1375.8 398.9,1375.7 410.0,1376.4 421.0,1376.5 432.1,1376.1 443.2,1375.9 454.3,1376.4 465.3,1375.6 476.4,1376.7 487.5,1376.1 498.6,1376.4 509.6,1375.9 520.7,1375.9 531.8,1376.2 542.9,1375.9 554.0,1375.6 565.0,1376.3 576.1,1376.4 587.2,1376.4 598.3,1376.2 609.3,1376.4 620.4,1376.7 631.5,1375.8 642.6,1376.5 653.6,1376.9 664.7,1375.9 675.8,1376.6 686.9,1375.9 697.9,1375.7 709.0,1376.5 720.1,1376.5 731.2,1375.7 742.2,1376.7 753.3,1376.5 764.4,1376.4 775.5,1376.4 786.5,1375.6 797.6,1376.1 808.7,1376.8 819.8,1375.6 830.8,1375.9 841.9,1376.2 853.0,1375.4 864.1,1375.8 875.1,1375.8 886.2,1376.3 897.3,1376.1 908.4,1375.5 919.5,1375.8 930.5,1376.2 941.6,1376.6 952.7,1375.9 963.8,1376.0 974.8,1375.7 985.9,1375.8 997.0,1375.8 1008.1,1376.1 1019.1,1375.9 1030.2,1376.2 1041.3,1375.9 1052.4,1375.9 1063.4,1375.9 1074.5,1376.4 1085.6,1375.9 1096.7,1376.1 1107.7,1376.4 1118.8,1376.1 1129.9,1375.8 1141.0,1376.3 1152.0,1375.5 1163.1,1376.0 1174.2,1375.7 1185.3,1375.8 1196.3,1376.7 1207.4,1376.8 1218.5,1375.9 1229.6,1376.2 1240.6,1376.3 1251.7,1375.9 1262.8,1376.0 1273.9,1376.0 1284.9,1376.4 1296.0,1375.6 1307.1,1376.9 1318.2,1375.7 1329.3,1376.3 1340.3,1375.8 1351.4,1376.1 1362.5,1376.0 1373.6,1375.6 1384.6,1376.3 1395.7,1376.9 1406.8,1376.3 1417.9,1377.0 1428.9,1376.3 1440.0,1376.4 1451.1,1375.9 1462.2,1376.3 1473.2,1376.0 1484.3,1376.7 1495.4,1376.0 1506.5,1376.2 1517.5,1375.7 1528.6,1375.3 1539.7,1375.8 1550.8,1375.8 1561.8,1376.4 1572.9,1376.3 1584.0,1375.4 1595.1,1376.7 1606.1,1376.2 1617.2,1375.9 1628.3,1375.7 1639.4,1376.3 1650.4,1376.1 1661.5,1375.9 1672.6,1375.6 1683.7,1376.0 1694.7,1376.2 1705.8,1375.6 1716.9,1375.7 1728.0,1376.3 1739.1,1375.9 1750.1,1376.1 1761.2,1376.0 1772.3,1376.7 1783.4,1376.0 1794.4,1376.1 1805.5,1376.5 1816.6,1376.1 1827.7,1376.4 1838.7,1376.3 1849.8,1376.2 1860.9,1375.3 1872.0,1375.7 1883.0,1376.5 1894.1,1375.6 1905.2,1376.2 1916.3,1375.6 1927.3,1375.8 1938.4,1375.6 1949.5,1375.7 1960.6,1376.2 1971.6,1376.3 1982.7,1376.0 1993.8,1376.0 2004.9,1375.6 2015.9,1375.2 2027.0,1376.0 2038.1,1375.3 2049.2,1375.9 2060.2,1375.8 2071.3,1376.4 2082.4,1376.0 2093.5,1375.8 2104.5,1376.1 2115.6,1376.3 2126.7,1376.1 2137.8,1375.6 2148.9,1375.7 2159.9,1376.3 2171.0,1375.7 2182.1,1376.1 2193.2,1376.2 2204.2,1375.6 2215.3,1375.9 2226.4,1376.0 2237.5,1376.1 2248.5,1377.2 2259.6,1375.7 2270.7,1375.5 2281.8,1377.0 2292.8,1377.0 2303.9,1376.3 2315.0,1375.7 2326.1,1375.9 2337.1,1375.9 2348.2,1376.4 2359.3,1376.4 2370.4,1375.9 2381.4,1376.6 2392.5,1375.6 2403.6,1375.8 2414.7,1376.1 2425.7,1376.4 2436.8,1375.5 2447.9,1376.1 2459.0,1376.7 2470.0,1376.4 2481.1,1376.8 2492.2,1375.8 2503.3,1376.5 2514.4,1376.1 2525.4,1375.9 2536.5,1375.6 2547.6,1376.6 2558.7,1375.9 2569.7,1376.3 2580.8,1376.1 2591.9,1376.9 2603.0,1376.1 2614.0,1376.0 2625.1,1376.0 2636.2,1375.9 2647.3,1376.4 2658.3,1376.7 2669.4,1375.8 2680.5,1376.6 2691.6,1375.1 2702.6,1376.2 2713.7,1376.8 2724.8,1375.8 2735.9,1376.1 2746.9,1376.3 2758.0,1376.3 2769.1,1376.2 2780.2,1376.6 2791.2,1375.7 2802.3,1375.6 2813.4,1376.0 2824.5,1376.3 2835.5,1376.0 2846.6,1375.7 2857.7,1375.9 2868.8,1376.2 2879.8,1375.9 2890.9,1376.5 2902.0,1375.8" fill="none" stroke="#5cc07c" stroke-width="4" stroke-linejoin="round" opacity="1.0"/><polyline points="122.0,1373.9 133.1,1374.3 144.2,1374.4 155.2,1374.8 166.3,1374.2 177.4,1374.1 188.5,1374.4 199.5,1374.4 210.6,1374.8 221.7,1373.8 232.8,1374.1 243.8,1374.4 254.9,1374.0 266.0,1374.1 277.1,1374.2 288.1,1374.3 299.2,1374.2 310.3,1374.1 321.4,1374.0 332.4,1373.9 343.5,1374.1 354.6,1373.9 365.7,1374.3 376.7,1374.8 387.8,1374.8 398.9,1373.9 410.0,1374.9 421.0,1374.6 432.1,1374.3 443.2,1373.9 454.3,1375.0 465.3,1374.7 476.4,1374.6 487.5,1374.5 498.6,1374.3 509.6,1374.0 520.7,1374.0 531.8,1373.2 542.9,1373.7 554.0,1374.8 565.0,1374.8 576.1,1374.4 587.2,1374.4 598.3,1373.9 609.3,1374.0 620.4,1374.0 631.5,1374.3 642.6,1374.1 653.6,1374.1 664.7,1374.3 675.8,1374.0 686.9,1374.8 697.9,1373.9 709.0,1374.0 720.1,1373.2 731.2,1374.3 742.2,1374.8 753.3,1374.5 764.4,1374.3 775.5,1374.6 786.5,1374.7 797.6,1374.4 808.7,1374.8 819.8,1373.9 830.8,1374.8 841.9,1374.1 853.0,1373.9 864.1,1374.1 875.1,1373.8 886.2,1374.1 897.3,1374.0 908.4,1374.6 919.5,1374.7 930.5,1374.5 941.6,1374.2 952.7,1373.9 963.8,1374.7 974.8,1374.5 985.9,1374.6 997.0,1374.0 1008.1,1374.5 1019.1,1373.9 1030.2,1374.4 1041.3,1374.6 1052.4,1374.5 1063.4,1374.9 1074.5,1375.3 1085.6,1374.5 1096.7,1374.6 1107.7,1373.5 1118.8,1374.1 1129.9,1374.0 1141.0,1374.2 1152.0,1374.4 1163.1,1374.8 1174.2,1374.7 1185.3,1373.8 1196.3,1374.5 1207.4,1374.4 1218.5,1374.0 1229.6,1374.4 1240.6,1374.4 1251.7,1373.5 1262.8,1374.1 1273.9,1374.4 1284.9,1374.4 1296.0,1374.5 1307.1,1374.1 1318.2,1374.1 1329.3,1374.5 1340.3,1374.4 1351.4,1374.9 1362.5,1374.4 1373.6,1374.0 1384.6,1374.6 1395.7,1374.3 1406.8,1374.5 1417.9,1374.4 1428.9,1374.2 1440.0,1374.6 1451.1,1373.9 1462.2,1373.8 1473.2,1373.8 1484.3,1374.6 1495.4,1375.0 1506.5,1374.5 1517.5,1374.2 1528.6,1374.3 1539.7,1374.3 1550.8,1374.3 1561.8,1374.4 1572.9,1374.0 1584.0,1374.8 1595.1,1374.1 1606.1,1374.1 1617.2,1374.5 1628.3,1372.9 1639.4,1374.2 1650.4,1374.2 1661.5,1374.7 1672.6,1374.2 1683.7,1374.2 1694.7,1373.9 1705.8,1374.4 1716.9,1373.9 1728.0,1374.8 1739.1,1374.3 1750.1,1374.9 1761.2,1374.3 1772.3,1374.0 1783.4,1374.8 1794.4,1374.0 1805.5,1374.1 1816.6,1374.9 1827.7,1374.6 1838.7,1374.5 1849.8,1374.1 1860.9,1373.8 1872.0,1374.5 1883.0,1374.6 1894.1,1374.4 1905.2,1375.3 1916.3,1374.1 1927.3,1374.3 1938.4,1374.4 1949.5,1373.8 1960.6,1374.4 1971.6,1374.5 1982.7,1373.9 1993.8,1374.4 2004.9,1374.3 2015.9,1374.4 2027.0,1374.3 2038.1,1374.2 2049.2,1374.2 2060.2,1374.7 2071.3,1373.8 2082.4,1374.4 2093.5,1374.4 2104.5,1374.0 2115.6,1374.4 2126.7,1374.1 2137.8,1373.9 2148.9,1373.9 2159.9,1374.4 2171.0,1373.9 2182.1,1374.3 2193.2,1374.5 2204.2,1374.6 2215.3,1374.1 2226.4,1374.5 2237.5,1373.8 2248.5,1374.0 2259.6,1374.1 2270.7,1373.9 2281.8,1373.9 2292.8,1374.5 2303.9,1373.4 2315.0,1374.8 2326.1,1374.2 2337.1,1374.9 2348.2,1374.4 2359.3,1374.4 2370.4,1374.8 2381.4,1374.1 2392.5,1374.2 2403.6,1374.3 2414.7,1374.6 2425.7,1373.8 2436.8,1374.3 2447.9,1374.0 2459.0,1374.8 2470.0,1373.7 2481.1,1374.4 2492.2,1373.9 2503.3,1374.4 2514.4,1374.3 2525.4,1374.1 2536.5,1374.3 2547.6,1373.5 2558.7,1374.3 2569.7,1374.4 2580.8,1373.9 2591.9,1374.2 2603.0,1374.6 2614.0,1374.4 2625.1,1374.0 2636.2,1374.2 2647.3,1373.8 2658.3,1374.7 2669.4,1374.1 2680.5,1374.5 2691.6,1374.4 2702.6,1374.5 2713.7,1374.6 2724.8,1373.4 2735.9,1374.2 2746.9,1374.0 2758.0,1374.1 2769.1,1373.6 2780.2,1374.5 2791.2,1374.7 2802.3,1374.0 2813.4,1374.6 2824.5,1373.7 2835.5,1374.6 2846.6,1374.3 2857.7,1374.0 2868.8,1374.6 2879.8,1374.4 2890.9,1374.1 2902.0,1374.8" fill="none" stroke="#48a848" stroke-width="4" stroke-linejoin="round" opacity="1.0"/><polyline points="122.0,1371.7 133.1,1372.6 144.2,1372.5 155.2,1372.7 166.3,1372.7 177.4,1372.0 188.5,1372.4 199.5,1372.5 210.6,1372.1 221.7,1371.8 232.8,1372.1 243.8,1372.1 254.9,1372.7 266.0,1372.0 277.1,1372.1 288.1,1372.8 299.2,1372.7 310.3,1372.3 321.4,1372.8 332.4,1372.8 343.5,1372.8 354.6,1372.2 365.7,1372.7 376.7,1372.5 387.8,1372.3 398.9,1372.0 410.0,1372.1 421.0,1372.2 432.1,1372.2 443.2,1373.1 454.3,1372.5 465.3,1372.1 476.4,1372.2 487.5,1372.6 498.6,1372.2 509.6,1372.5 520.7,1372.4 531.8,1372.5 542.9,1372.8 554.0,1373.0 565.0,1372.9 576.1,1372.6 587.2,1371.4 598.3,1373.1 609.3,1372.3 620.4,1372.1 631.5,1372.1 642.6,1372.4 653.6,1372.3 664.7,1372.3 675.8,1372.6 686.9,1372.6 697.9,1372.4 709.0,1372.4 720.1,1372.4 731.2,1372.7 742.2,1372.0 753.3,1372.2 764.4,1372.6 775.5,1373.0 786.5,1372.9 797.6,1372.6 808.7,1372.5 819.8,1372.8 830.8,1372.1 841.9,1372.9 853.0,1372.0 864.1,1373.0 875.1,1372.2 886.2,1372.8 897.3,1373.0 908.4,1372.5 919.5,1372.5 930.5,1372.5 941.6,1372.2 952.7,1372.6 963.8,1372.9 974.8,1372.4 985.9,1372.1 997.0,1372.2 1008.1,1373.0 1019.1,1372.8 1030.2,1372.7 1041.3,1372.7 1052.4,1373.3 1063.4,1372.8 1074.5,1372.9 1085.6,1373.0 1096.7,1371.9 1107.7,1372.4 1118.8,1372.4 1129.9,1372.2 1141.0,1372.6 1152.0,1372.3 1163.1,1372.2 1174.2,1372.3 1185.3,1372.4 1196.3,1372.2 1207.4,1372.4 1218.5,1372.6 1229.6,1372.4 1240.6,1372.3 1251.7,1372.7 1262.8,1372.5 1273.9,1372.7 1284.9,1372.5 1296.0,1372.3 1307.1,1372.1 1318.2,1371.8 1329.3,1372.1 1340.3,1372.8 1351.4,1372.6 1362.5,1373.3 1373.6,1372.7 1384.6,1372.8 1395.7,1372.4 1406.8,1372.4 1417.9,1372.1 1428.9,1372.4 1440.0,1372.9 1451.1,1372.6 1462.2,1371.7 1473.2,1372.2 1484.3,1372.2 1495.4,1372.3 1506.5,1373.2 1517.5,1372.5 1528.6,1372.4 1539.7,1372.8 1550.8,1372.6 1561.8,1372.1 1572.9,1372.4 1584.0,1372.4 1595.1,1372.5 1606.1,1372.4 1617.2,1372.3 1628.3,1372.4 1639.4,1372.8 1650.4,1372.7 1661.5,1373.0 1672.6,1372.1 1683.7,1372.4 1694.7,1372.0 1705.8,1372.0 1716.9,1372.8 1728.0,1372.4 1739.1,1372.2 1750.1,1373.1 1761.2,1372.3 1772.3,1372.4 1783.4,1372.6 1794.4,1372.2 1805.5,1372.8 1816.6,1372.3 1827.7,1371.9 1838.7,1372.5 1849.8,1372.0 1860.9,1372.6 1872.0,1372.4 1883.0,1372.0 1894.1,1372.2 1905.2,1372.1 1916.3,1371.9 1927.3,1371.8 1938.4,1372.7 1949.5,1371.7 1960.6,1372.4 1971.6,1372.2 1982.7,1372.4 1993.8,1371.8 2004.9,1372.2 2015.9,1373.0 2027.0,1372.6 2038.1,1372.5 2049.2,1372.4 2060.2,1372.4 2071.3,1372.3 2082.4,1372.5 2093.5,1372.5 2104.5,1372.5 2115.6,1372.6 2126.7,1372.0 2137.8,1372.4 2148.9,1372.3 2159.9,1372.2 2171.0,1372.6 2182.1,1371.9 2193.2,1372.4 2204.2,1372.0 2215.3,1372.5 2226.4,1372.1 2237.5,1372.4 2248.5,1372.7 2259.6,1372.6 2270.7,1373.0 2281.8,1372.2 2292.8,1372.8 2303.9,1373.0 2315.0,1372.0 2326.1,1372.6 2337.1,1372.3 2348.2,1372.5 2359.3,1373.0 2370.4,1372.5 2381.4,1372.1 2392.5,1372.6 2403.6,1373.2 2414.7,1372.2 2425.7,1372.6 2436.8,1372.4 2447.9,1372.7 2459.0,1372.4 2470.0,1372.8 2481.1,1373.0 2492.2,1372.2 2503.3,1372.4 2514.4,1371.9 2525.4,1372.8 2536.5,1372.4 2547.6,1372.8 2558.7,1371.8 2569.7,1372.7 2580.8,1372.3 2591.9,1372.9 2603.0,1372.6 2614.0,1372.6 2625.1,1372.4 2636.2,1372.4 2647.3,1372.0 2658.3,1372.3 2669.4,1372.0 2680.5,1372.6 2691.6,1372.3 2702.6,1373.0 2713.7,1372.2 2724.8,1372.6 2735.9,1373.3 2746.9,1372.4 2758.0,1372.7 2769.1,1372.0 2780.2,1372.6 2791.2,1372.3 2802.3,1372.4 2813.4,1372.1 2824.5,1371.7 2835.5,1372.3 2846.6,1372.6 2857.7,1372.2 2868.8,1372.4 2879.8,1372.5 2890.9,1372.4 2902.0,1372.9" fill="none" stroke="#3d9a35" stroke-width="4" stroke-linejoin="round" opacity="1.0"/><polyline points="122.0,1358.8 133.1,1332.6 144.2,1369.6 155.2,1370.9 166.3,1357.5 177.4,1370.9 188.5,1360.6 199.5,1371.2 210.6,1337.5 221.7,1370.6 232.8,1348.9 243.8,1367.7 254.9,1368.5 266.0,1371.2 277.1,1368.9 288.1,1368.4 299.2,1371.2 310.3,1372.0 321.4,1369.9 332.4,1370.3 343.5,1370.8 354.6,1373.1 365.7,1277.7 376.7,1373.1 387.8,1369.9 398.9,1361.2 410.0,1370.5 421.0,1369.4 432.1,1357.7 443.2,1369.7 454.3,1357.9 465.3,1360.6 476.4,1369.9 487.5,1370.7 498.6,1320.6 509.6,1362.7 520.7,1369.4 531.8,1371.3 542.9,1371.3 554.0,1362.5 565.0,1373.1 576.1,1214.4 587.2,1373.1 598.3,1338.1 609.3,1371.1 620.4,1369.2 631.5,1370.3 642.6,1368.0 653.6,1363.5 664.7,1369.8 675.8,1339.3 686.9,1370.5 697.9,1370.7 709.0,1371.8 720.1,1360.3 731.2,1336.9 742.2,1363.0 753.3,1360.2 764.4,1371.0 775.5,1357.9 786.5,1369.2 797.6,1367.7 808.7,1372.0 819.8,1370.6 830.8,1369.8 841.9,1369.6 853.0,1371.6 864.1,1369.5 875.1,1356.8 886.2,1371.0 897.3,1372.1 908.4,1371.6 919.5,1366.3 930.5,1369.2 941.6,1371.0 952.7,1361.4 963.8,1371.6 974.8,1369.1 985.9,1368.6 997.0,1361.6 1008.1,1357.5 1019.1,1370.5 1030.2,1370.2 1041.3,1361.9 1052.4,1370.3 1063.4,1369.3 1074.5,1372.4 1085.6,1369.0 1096.7,1372.9 1107.7,1370.9 1118.8,1368.4 1129.9,1369.6 1141.0,1370.3 1152.0,1368.4 1163.1,1368.5 1174.2,1368.4 1185.3,1370.7 1196.3,1327.8 1207.4,1371.2 1218.5,1371.6 1229.6,1369.7 1240.6,1370.5 1251.7,1370.2 1262.8,1359.2 1273.9,1370.4 1284.9,1370.3 1296.0,1361.4 1307.1,1358.0 1318.2,1357.9 1329.3,1369.3 1340.3,1365.0 1351.4,1359.8 1362.5,1358.5 1373.6,1369.1 1384.6,1370.4 1395.7,1368.5 1406.8,1338.1 1417.9,1369.0 1428.9,1370.4 1440.0,1370.1 1451.1,1369.1 1462.2,1371.3 1473.2,1370.3 1484.3,1369.4 1495.4,1368.8 1506.5,1372.2 1517.5,1367.9 1528.6,1370.6 1539.7,1371.0 1550.8,1360.1 1561.8,1342.3 1572.9,1361.0 1584.0,1369.6 1595.1,1371.7 1606.1,1371.6 1617.2,1358.5 1628.3,1370.6 1639.4,1327.2 1650.4,1370.6 1661.5,1369.9 1672.6,1370.2 1683.7,1362.6 1694.7,1370.8 1705.8,1357.7 1716.9,1342.3 1728.0,1369.5 1739.1,1357.4 1750.1,1370.4 1761.2,1358.0 1772.3,1357.6 1783.4,1370.3 1794.4,1360.3 1805.5,1370.4 1816.6,1359.6 1827.7,1371.8 1838.7,1368.8 1849.8,1371.8 1860.9,1369.0 1872.0,1339.3 1883.0,1370.7 1894.1,1369.9 1905.2,1369.3 1916.3,1369.4 1927.3,1368.9 1938.4,1363.0 1949.5,1336.9 1960.6,1370.7 1971.6,1372.5 1982.7,1371.0 1993.8,1370.5 2004.9,1368.9 2015.9,1369.5 2027.0,1327.2 2038.1,1360.8 2049.2,1362.8 2060.2,1367.5 2071.3,1359.9 2082.4,1369.5 2093.5,1358.3 2104.5,1323.0 2115.6,1368.4 2126.7,1365.6 2137.8,1355.7 2148.9,1367.6 2159.9,1371.1 2171.0,1370.5 2182.1,1324.8 2193.2,1370.9 2204.2,1369.7 2215.3,1369.9 2226.4,1369.8 2237.5,1369.3 2248.5,1369.7 2259.6,1330.2 2270.7,1370.2 2281.8,1360.5 2292.8,1371.0 2303.9,1361.4 2315.0,1362.6 2326.1,1369.1 2337.1,1370.4 2348.2,1361.1 2359.3,1370.3 2370.4,1370.6 2381.4,1364.5 2392.5,1342.9 2403.6,1363.5 2414.7,1368.5 2425.7,1369.4 2436.8,1356.8 2447.9,1371.4 2459.0,1370.6 2470.0,1339.3 2481.1,1370.8 2492.2,1368.8 2503.3,1371.3 2514.4,1366.5 2525.4,1370.0 2536.5,1372.2 2547.6,1336.9 2558.7,1369.5 2569.7,1369.0 2580.8,1369.5 2591.9,1370.3 2603.0,1362.9 2614.0,1359.4 2625.1,1338.7 2636.2,1369.7 2647.3,1364.2 2658.3,1368.7 2669.4,1364.2 2680.5,1370.8 2691.6,1362.4 2702.6,1336.9 2713.7,1368.9 2724.8,1371.7 2735.9,1369.8 2746.9,1370.6 2758.0,1371.1 2769.1,1370.2 2780.2,1324.8 2791.2,1362.9 2802.3,1367.6 2813.4,1369.2 2824.5,1368.9 2835.5,1371.3 2846.6,1370.5 2857.7,1357.7 2868.8,1369.6 2879.8,1356.4 2890.9,1371.4 2902.0,1369.7" fill="none" stroke="#7a1a40" stroke-width="3.5" stroke-linejoin="round" opacity="1.0"/><polyline points="122.0,1356.6 133.1,1355.9 144.2,1356.7 155.2,1356.5 166.3,1357.2 177.4,1356.0 188.5,1356.4 199.5,1356.8 210.6,1355.7 221.7,1356.3 232.8,1354.5 243.8,1355.4 254.9,1353.8 266.0,1356.4 277.1,1355.9 288.1,1356.8 299.2,1355.8 310.3,1355.2 321.4,1356.1 332.4,1355.4 343.5,1356.6 354.6,1355.1 365.7,1357.1 376.7,1354.2 387.8,1355.8 398.9,1356.7 410.0,1358.1 421.0,1356.4 432.1,1353.3 443.2,1355.5 454.3,1357.4 465.3,1356.7 476.4,1358.3 487.5,1354.7 498.6,1357.4 509.6,1356.4 520.7,1355.4 531.8,1356.4 542.9,1358.9 554.0,1355.6 565.0,1355.1 576.1,1365.2 587.2,1355.8 598.3,1356.7 609.3,1356.8 620.4,1357.4 631.5,1352.9 642.6,1356.2 653.6,1357.9 664.7,1354.8 675.8,1357.0 686.9,1355.2 697.9,1356.6 709.0,1358.6 720.1,1356.0 731.2,1356.9 742.2,1353.5 753.3,1355.0 764.4,1357.7 775.5,1356.5 786.5,1357.0 797.6,1358.9 808.7,1356.4 819.8,1357.8 830.8,1357.9 841.9,1355.7 853.0,1356.3 864.1,1357.7 875.1,1355.0 886.2,1356.4 897.3,1352.8 908.4,1358.7 919.5,1356.3 930.5,1357.4 941.6,1357.3 952.7,1356.4 963.8,1355.5 974.8,1358.1 985.9,1355.7 997.0,1355.1 1008.1,1356.1 1019.1,1356.9 1030.2,1356.2 1041.3,1357.7 1052.4,1355.6 1063.4,1355.2 1074.5,1355.7 1085.6,1356.5 1096.7,1359.7 1107.7,1355.6 1118.8,1356.7 1129.9,1354.1 1141.0,1358.5 1152.0,1354.6 1163.1,1354.3 1174.2,1356.9 1185.3,1355.4 1196.3,1353.5 1207.4,1357.4 1218.5,1354.4 1229.6,1357.0 1240.6,1357.6 1251.7,1357.8 1262.8,1354.9 1273.9,1353.7 1284.9,1356.5 1296.0,1355.7 1307.1,1357.0 1318.2,1356.1 1329.3,1354.2 1340.3,1358.6 1351.4,1355.5 1362.5,1359.3 1373.6,1356.2 1384.6,1353.4 1395.7,1355.9 1406.8,1356.7 1417.9,1354.2 1428.9,1357.6 1440.0,1357.1 1451.1,1358.1 1462.2,1355.5 1473.2,1355.4 1484.3,1357.0 1495.4,1356.4 1506.5,1357.6 1517.5,1356.9 1528.6,1357.4 1539.7,1356.5 1550.8,1356.8 1561.8,1358.1 1572.9,1354.9 1584.0,1355.3 1595.1,1354.4 1606.1,1357.5 1617.2,1355.8 1628.3,1356.3 1639.4,1354.2 1650.4,1355.6 1661.5,1355.2 1672.6,1355.1 1683.7,1355.4 1694.7,1354.8 1705.8,1355.6 1716.9,1356.8 1728.0,1356.2 1739.1,1355.2 1750.1,1355.5 1761.2,1354.9 1772.3,1356.8 1783.4,1356.8 1794.4,1356.7 1805.5,1356.1 1816.6,1356.6 1827.7,1354.5 1838.7,1356.4 1849.8,1358.2 1860.9,1354.9 1872.0,1355.8 1883.0,1355.1 1894.1,1355.4 1905.2,1358.5 1916.3,1356.4 1927.3,1355.4 1938.4,1356.6 1949.5,1357.4 1960.6,1353.4 1971.6,1358.3 1982.7,1354.4 1993.8,1356.2 2004.9,1354.2 2015.9,1356.4 2027.0,1355.9 2038.1,1353.2 2049.2,1354.7 2060.2,1355.7 2071.3,1356.0 2082.4,1354.4 2093.5,1357.7 2104.5,1356.6 2115.6,1355.7 2126.7,1357.3 2137.8,1358.8 2148.9,1356.1 2159.9,1356.7 2171.0,1355.6 2182.1,1357.5 2193.2,1356.2 2204.2,1357.7 2215.3,1356.4 2226.4,1356.9 2237.5,1355.2 2248.5,1354.7 2259.6,1357.0 2270.7,1355.9 2281.8,1356.7 2292.8,1356.7 2303.9,1356.5 2315.0,1355.6 2326.1,1354.5 2337.1,1356.3 2348.2,1357.9 2359.3,1356.8 2370.4,1355.7 2381.4,1354.9 2392.5,1357.3 2403.6,1353.5 2414.7,1355.5 2425.7,1355.9 2436.8,1356.0 2447.9,1358.3 2459.0,1354.5 2470.0,1356.5 2481.1,1355.3 2492.2,1356.7 2503.3,1357.8 2514.4,1354.8 2525.4,1356.4 2536.5,1357.5 2547.6,1355.4 2558.7,1355.3 2569.7,1355.7 2580.8,1356.1 2591.9,1357.1 2603.0,1355.4 2614.0,1357.0 2625.1,1355.9 2636.2,1355.2 2647.3,1356.1 2658.3,1354.9 2669.4,1357.0 2680.5,1359.4 2691.6,1357.3 2702.6,1355.5 2713.7,1356.1 2724.8,1357.2 2735.9,1356.7 2746.9,1354.3 2758.0,1354.0 2769.1,1354.9 2780.2,1355.6 2791.2,1355.4 2802.3,1357.0 2813.4,1356.4 2824.5,1353.9 2835.5,1354.1 2846.6,1357.8 2857.7,1356.1 2868.8,1354.2 2879.8,1356.4 2890.9,1356.6 2902.0,1358.1" fill="none" stroke="#444444" stroke-width="4" stroke-linejoin="round" opacity="1.0"/><polyline points="122.0,1357.6 133.1,1353.8 144.2,1357.0 155.2,1355.4 166.3,1354.3 177.4,1356.1 188.5,1352.8 199.5,1355.3 210.6,1352.5 221.7,1353.2 232.8,1354.3 243.8,1350.1 254.9,1355.5 266.0,1356.1 277.1,1353.4 288.1,1355.3 299.2,1354.8 310.3,1355.0 321.4,1355.7 332.4,1352.5 343.5,1355.2 354.6,1353.3 365.7,1353.0 376.7,1353.5 387.8,1354.1 398.9,1356.2 410.0,1356.0 421.0,1356.9 432.1,1356.8 443.2,1360.6 454.3,1356.6 465.3,1355.4 476.4,1357.8 487.5,1354.6 498.6,1349.8 509.6,1355.0 520.7,1355.2 531.8,1354.2 542.9,1353.8 554.0,1355.4 565.0,1355.4 576.1,1355.9 587.2,1357.9 598.3,1355.0 609.3,1353.3 620.4,1355.5 631.5,1357.9 642.6,1353.5 653.6,1355.8 664.7,1355.1 675.8,1355.7 686.9,1353.8 697.9,1354.8 709.0,1357.6 720.1,1353.1 731.2,1353.9 742.2,1354.5 753.3,1358.4 764.4,1355.4 775.5,1357.3 786.5,1359.4 797.6,1354.6 808.7,1356.3 819.8,1354.7 830.8,1355.5 841.9,1353.3 853.0,1356.2 864.1,1354.2 875.1,1357.5 886.2,1352.4 897.3,1354.4 908.4,1354.2 919.5,1354.8 930.5,1353.9 941.6,1351.6 952.7,1355.3 963.8,1354.9 974.8,1355.1 985.9,1356.3 997.0,1357.5 1008.1,1354.5 1019.1,1353.6 1030.2,1356.8 1041.3,1355.1 1052.4,1356.8 1063.4,1353.7 1074.5,1354.3 1085.6,1358.0 1096.7,1352.6 1107.7,1357.3 1118.8,1354.0 1129.9,1352.6 1141.0,1354.9 1152.0,1352.7 1163.1,1357.7 1174.2,1352.0 1185.3,1357.0 1196.3,1354.5 1207.4,1355.6 1218.5,1352.9 1229.6,1355.7 1240.6,1355.5 1251.7,1352.9 1262.8,1355.6 1273.9,1354.6 1284.9,1351.5 1296.0,1352.3 1307.1,1354.1 1318.2,1358.1 1329.3,1352.0 1340.3,1351.5 1351.4,1353.3 1362.5,1356.9 1373.6,1357.0 1384.6,1356.4 1395.7,1354.2 1406.8,1356.2 1417.9,1355.8 1428.9,1353.2 1440.0,1356.2 1451.1,1354.7 1462.2,1357.9 1473.2,1354.4 1484.3,1353.0 1495.4,1354.2 1506.5,1354.6 1517.5,1350.4 1528.6,1352.8 1539.7,1356.7 1550.8,1354.6 1561.8,1355.3 1572.9,1356.2 1584.0,1354.4 1595.1,1354.5 1606.1,1354.0 1617.2,1353.8 1628.3,1354.8 1639.4,1353.0 1650.4,1356.9 1661.5,1351.7 1672.6,1358.6 1683.7,1355.5 1694.7,1357.0 1705.8,1356.0 1716.9,1354.3 1728.0,1355.0 1739.1,1351.4 1750.1,1356.2 1761.2,1354.5 1772.3,1354.8 1783.4,1355.8 1794.4,1353.8 1805.5,1355.9 1816.6,1356.3 1827.7,1355.3 1838.7,1357.1 1849.8,1355.8 1860.9,1353.9 1872.0,1355.6 1883.0,1355.9 1894.1,1356.2 1905.2,1354.9 1916.3,1356.5 1927.3,1357.2 1938.4,1358.0 1949.5,1354.4 1960.6,1355.0 1971.6,1355.6 1982.7,1356.8 1993.8,1356.0 2004.9,1356.7 2015.9,1356.0 2027.0,1353.1 2038.1,1357.3 2049.2,1355.0 2060.2,1355.7 2071.3,1356.0 2082.4,1354.2 2093.5,1352.7 2104.5,1355.5 2115.6,1352.4 2126.7,1353.6 2137.8,1353.1 2148.9,1354.8 2159.9,1354.4 2171.0,1354.1 2182.1,1356.3 2193.2,1359.2 2204.2,1355.0 2215.3,1353.6 2226.4,1350.8 2237.5,1355.1 2248.5,1353.5 2259.6,1357.7 2270.7,1354.8 2281.8,1354.4 2292.8,1353.6 2303.9,1353.0 2315.0,1352.2 2326.1,1354.5 2337.1,1349.9 2348.2,1353.8 2359.3,1355.2 2370.4,1357.9 2381.4,1357.7 2392.5,1353.5 2403.6,1352.9 2414.7,1356.6 2425.7,1357.3 2436.8,1354.2 2447.9,1354.7 2459.0,1355.6 2470.0,1355.6 2481.1,1355.7 2492.2,1355.4 2503.3,1355.0 2514.4,1354.0 2525.4,1356.6 2536.5,1357.1 2547.6,1356.3 2558.7,1356.6 2569.7,1354.5 2580.8,1354.1 2591.9,1356.3 2603.0,1357.0 2614.0,1354.7 2625.1,1354.3 2636.2,1350.3 2647.3,1353.0 2658.3,1358.6 2669.4,1355.4 2680.5,1352.1 2691.6,1353.0 2702.6,1356.6 2713.7,1353.6 2724.8,1355.5 2735.9,1354.4 2746.9,1356.5 2758.0,1355.3 2769.1,1356.1 2780.2,1352.9 2791.2,1354.0 2802.3,1354.8 2813.4,1356.3 2824.5,1355.0 2835.5,1356.0 2846.6,1353.3 2857.7,1355.2 2868.8,1356.0 2879.8,1355.7 2890.9,1355.4 2902.0,1355.4" fill="none" stroke="#4a4a14" stroke-width="3.5" stroke-linejoin="round" opacity="1.0"/><polyline points="122.0,1353.0 133.1,1351.5 144.2,1352.0 155.2,1349.2 166.3,1352.5 177.4,1350.9 188.5,1350.1 199.5,1351.0 210.6,1347.8 221.7,1353.4 232.8,1352.0 243.8,1352.6 254.9,1354.5 266.0,1352.3 277.1,1351.2 288.1,1351.9 299.2,1348.0 310.3,1351.6 321.4,1354.1 332.4,1353.6 343.5,1350.4 354.6,1351.0 365.7,1352.1 376.7,1352.8 387.8,1353.2 398.9,1353.4 410.0,1350.5 421.0,1352.2 432.1,1355.4 443.2,1349.4 454.3,1351.6 465.3,1351.2 476.4,1349.4 487.5,1350.4 498.6,1350.9 509.6,1349.5 520.7,1351.7 531.8,1351.2 542.9,1348.0 554.0,1348.3 565.0,1353.0 576.1,1353.1 587.2,1354.6 598.3,1349.8 609.3,1354.6 620.4,1353.2 631.5,1349.7 642.6,1350.7 653.6,1349.4 664.7,1351.6 675.8,1349.7 686.9,1352.6 697.9,1349.3 709.0,1353.2 720.1,1351.1 731.2,1350.8 742.2,1350.2 753.3,1350.0 764.4,1349.5 775.5,1352.8 786.5,1354.4 797.6,1352.7 808.7,1348.0 819.8,1351.3 830.8,1349.4 841.9,1349.2 853.0,1352.1 864.1,1352.9 875.1,1349.9 886.2,1352.1 897.3,1354.5 908.4,1350.7 919.5,1349.5 930.5,1353.5 941.6,1351.1 952.7,1352.5 963.8,1352.5 974.8,1350.3 985.9,1351.6 997.0,1348.8 1008.1,1351.7 1019.1,1350.9 1030.2,1348.8 1041.3,1348.5 1052.4,1350.1 1063.4,1351.6 1074.5,1351.2 1085.6,1352.5 1096.7,1349.6 1107.7,1350.6 1118.8,1350.0 1129.9,1349.4 1141.0,1349.1 1152.0,1352.4 1163.1,1352.9 1174.2,1351.4 1185.3,1352.4 1196.3,1352.6 1207.4,1353.1 1218.5,1350.5 1229.6,1355.5 1240.6,1351.9 1251.7,1349.5 1262.8,1350.7 1273.9,1352.4 1284.9,1352.6 1296.0,1351.2 1307.1,1349.9 1318.2,1352.2 1329.3,1353.2 1340.3,1351.0 1351.4,1352.4 1362.5,1352.7 1373.6,1350.2 1384.6,1353.5 1395.7,1350.5 1406.8,1352.4 1417.9,1350.7 1428.9,1355.1 1440.0,1350.9 1451.1,1350.1 1462.2,1348.6 1473.2,1350.0 1484.3,1351.4 1495.4,1351.6 1506.5,1350.0 1517.5,1351.0 1528.6,1353.6 1539.7,1347.5 1550.8,1349.6 1561.8,1349.8 1572.9,1351.4 1584.0,1351.2 1595.1,1354.1 1606.1,1349.9 1617.2,1352.6 1628.3,1350.7 1639.4,1355.7 1650.4,1349.9 1661.5,1352.7 1672.6,1354.7 1683.7,1351.4 1694.7,1354.9 1705.8,1352.7 1716.9,1353.9 1728.0,1350.0 1739.1,1352.8 1750.1,1351.4 1761.2,1352.8 1772.3,1349.5 1783.4,1352.9 1794.4,1352.2 1805.5,1352.4 1816.6,1348.1 1827.7,1354.4 1838.7,1349.4 1849.8,1350.3 1860.9,1352.0 1872.0,1353.5 1883.0,1355.4 1894.1,1354.9 1905.2,1353.0 1916.3,1354.1 1927.3,1347.1 1938.4,1353.8 1949.5,1351.7 1960.6,1349.4 1971.6,1349.7 1982.7,1349.1 1993.8,1351.8 2004.9,1353.2 2015.9,1349.9 2027.0,1349.5 2038.1,1351.7 2049.2,1349.5 2060.2,1354.8 2071.3,1351.6 2082.4,1352.0 2093.5,1353.0 2104.5,1350.3 2115.6,1352.0 2126.7,1350.0 2137.8,1351.1 2148.9,1352.6 2159.9,1351.6 2171.0,1352.7 2182.1,1352.6 2193.2,1349.8 2204.2,1348.7 2215.3,1354.2 2226.4,1351.7 2237.5,1351.2 2248.5,1354.7 2259.6,1351.2 2270.7,1348.6 2281.8,1352.6 2292.8,1350.3 2303.9,1356.6 2315.0,1351.4 2326.1,1350.6 2337.1,1350.0 2348.2,1351.9 2359.3,1350.7 2370.4,1352.0 2381.4,1351.4 2392.5,1353.5 2403.6,1350.9 2414.7,1355.4 2425.7,1351.1 2436.8,1350.0 2447.9,1351.9 2459.0,1351.5 2470.0,1354.5 2481.1,1348.1 2492.2,1350.9 2503.3,1352.8 2514.4,1350.9 2525.4,1352.3 2536.5,1352.6 2547.6,1354.8 2558.7,1354.1 2569.7,1354.4 2580.8,1348.1 2591.9,1349.5 2603.0,1350.6 2614.0,1352.8 2625.1,1353.3 2636.2,1352.5 2647.3,1354.3 2658.3,1350.9 2669.4,1353.9 2680.5,1353.1 2691.6,1350.1 2702.6,1351.0 2713.7,1349.7 2724.8,1353.3 2735.9,1352.5 2746.9,1350.6 2758.0,1349.2 2769.1,1348.7 2780.2,1351.5 2791.2,1349.9 2802.3,1350.8 2813.4,1352.3 2824.5,1354.4 2835.5,1351.7 2846.6,1351.7 2857.7,1351.4 2868.8,1351.7 2879.8,1348.9 2890.9,1352.9 2902.0,1350.0" fill="none" stroke="#8a3a2a" stroke-width="3.5" stroke-linejoin="round" opacity="1.0"/><polyline points="122.0,1348.3 133.1,1350.0 144.2,1345.6 155.2,1353.6 166.3,1353.1 177.4,1350.6 188.5,1350.6 199.5,1347.0 210.6,1353.0 221.7,1348.7 232.8,1348.3 243.8,1350.9 254.9,1347.0 266.0,1351.2 277.1,1350.0 288.1,1349.8 299.2,1349.2 310.3,1350.2 321.4,1348.1 332.4,1347.2 343.5,1351.1 354.6,1349.3 365.7,1349.6 376.7,1349.6 387.8,1351.9 398.9,1352.8 410.0,1355.8 421.0,1351.4 432.1,1349.7 443.2,1349.8 454.3,1350.3 465.3,1352.0 476.4,1351.3 487.5,1335.1 498.6,1352.0 509.6,1352.9 520.7,1342.6 531.8,1353.1 542.9,1350.8 554.0,1347.1 565.0,1351.0 576.1,1333.8 587.2,1352.3 598.3,1350.1 609.3,1352.8 620.4,1344.7 631.5,1350.2 642.6,1348.1 653.6,1339.2 664.7,1352.0 675.8,1349.1 686.9,1349.3 697.9,1349.1 709.0,1341.5 720.1,1354.2 731.2,1350.4 742.2,1348.4 753.3,1352.1 764.4,1352.7 775.5,1346.6 786.5,1346.1 797.6,1352.6 808.7,1346.3 819.8,1351.4 830.8,1349.8 841.9,1352.6 853.0,1351.6 864.1,1352.6 875.1,1353.3 886.2,1345.0 897.3,1346.7 908.4,1349.7 919.5,1342.8 930.5,1352.1 941.6,1346.6 952.7,1351.0 963.8,1348.5 974.8,1344.5 985.9,1345.9 997.0,1348.8 1008.1,1350.3 1019.1,1349.7 1030.2,1347.9 1041.3,1351.6 1052.4,1350.1 1063.4,1350.2 1074.5,1348.8 1085.6,1347.5 1096.7,1349.1 1107.7,1346.6 1118.8,1350.4 1129.9,1347.4 1141.0,1351.0 1152.0,1349.7 1163.1,1351.7 1174.2,1351.9 1185.3,1349.4 1196.3,1347.8 1207.4,1350.4 1218.5,1347.1 1229.6,1350.5 1240.6,1350.6 1251.7,1349.2 1262.8,1353.4 1273.9,1350.5 1284.9,1351.2 1296.0,1348.3 1307.1,1351.8 1318.2,1339.1 1329.3,1353.4 1340.3,1337.3 1351.4,1348.6 1362.5,1348.4 1373.6,1351.6 1384.6,1346.0 1395.7,1351.4 1406.8,1348.3 1417.9,1351.7 1428.9,1351.9 1440.0,1348.3 1451.1,1348.7 1462.2,1352.2 1473.2,1349.8 1484.3,1349.3 1495.4,1346.5 1506.5,1349.9 1517.5,1348.0 1528.6,1348.5 1539.7,1350.0 1550.8,1349.7 1561.8,1350.1 1572.9,1348.9 1584.0,1349.7 1595.1,1352.3 1606.1,1349.5 1617.2,1347.9 1628.3,1349.3 1639.4,1353.9 1650.4,1348.2 1661.5,1351.0 1672.6,1351.9 1683.7,1349.3 1694.7,1351.4 1705.8,1351.1 1716.9,1351.2 1728.0,1350.0 1739.1,1346.7 1750.1,1350.9 1761.2,1345.9 1772.3,1352.2 1783.4,1350.0 1794.4,1334.4 1805.5,1349.5 1816.6,1350.7 1827.7,1349.2 1838.7,1352.5 1849.8,1349.9 1860.9,1339.4 1872.0,1351.4 1883.0,1353.5 1894.1,1352.7 1905.2,1350.3 1916.3,1351.4 1927.3,1352.9 1938.4,1351.5 1949.5,1342.8 1960.6,1354.7 1971.6,1351.2 1982.7,1350.8 1993.8,1345.1 2004.9,1351.3 2015.9,1349.7 2027.0,1344.5 2038.1,1348.6 2049.2,1351.6 2060.2,1347.0 2071.3,1349.5 2082.4,1339.7 2093.5,1350.9 2104.5,1349.0 2115.6,1349.9 2126.7,1351.9 2137.8,1350.5 2148.9,1350.8 2159.9,1351.4 2171.0,1352.2 2182.1,1348.2 2193.2,1354.8 2204.2,1346.0 2215.3,1348.6 2226.4,1347.0 2237.5,1351.5 2248.5,1351.6 2259.6,1350.4 2270.7,1350.1 2281.8,1352.1 2292.8,1350.7 2303.9,1348.7 2315.0,1349.9 2326.1,1351.0 2337.1,1349.9 2348.2,1341.0 2359.3,1349.1 2370.4,1348.8 2381.4,1351.1 2392.5,1347.4 2403.6,1348.3 2414.7,1348.9 2425.7,1349.8 2436.8,1353.2 2447.9,1348.9 2459.0,1348.4 2470.0,1353.5 2481.1,1353.1 2492.2,1349.4 2503.3,1348.6 2514.4,1351.4 2525.4,1349.2 2536.5,1350.7 2547.6,1347.9 2558.7,1351.5 2569.7,1340.2 2580.8,1348.4 2591.9,1349.5 2603.0,1351.9 2614.0,1340.8 2625.1,1350.8 2636.2,1351.5 2647.3,1349.3 2658.3,1348.2 2669.4,1349.2 2680.5,1340.2 2691.6,1347.3 2702.6,1350.5 2713.7,1349.0 2724.8,1347.3 2735.9,1351.4 2746.9,1353.5 2758.0,1353.7 2769.1,1351.2 2780.2,1351.6 2791.2,1353.9 2802.3,1347.3 2813.4,1347.8 2824.5,1350.8 2835.5,1354.0 2846.6,1350.3 2857.7,1348.8 2868.8,1348.3 2879.8,1348.0 2890.9,1349.4 2902.0,1336.6" fill="none" stroke="#d4882a" stroke-width="3.5" stroke-linejoin="round" opacity="1.0"/><polyline points="122.0,1348.0 133.1,1345.4 144.2,1344.5 155.2,1346.3 166.3,1343.9 177.4,1343.0 188.5,1346.9 199.5,1343.0 210.6,1344.9 221.7,1345.8 232.8,1346.1 243.8,1344.5 254.9,1347.2 266.0,1341.6 277.1,1344.8 288.1,1343.6 299.2,1344.9 310.3,1344.3 321.4,1344.9 332.4,1345.0 343.5,1344.6 354.6,1348.0 365.7,1347.0 376.7,1342.8 387.8,1344.1 398.9,1345.9 410.0,1345.8 421.0,1346.1 432.1,1345.8 443.2,1343.6 454.3,1347.8 465.3,1344.7 476.4,1346.5 487.5,1344.0 498.6,1344.9 509.6,1347.0 520.7,1346.4 531.8,1348.1 542.9,1344.2 554.0,1346.1 565.0,1345.3 576.1,1342.3 587.2,1345.7 598.3,1343.2 609.3,1346.8 620.4,1341.6 631.5,1346.5 642.6,1345.3 653.6,1345.0 664.7,1345.5 675.8,1345.8 686.9,1342.7 697.9,1347.3 709.0,1342.7 720.1,1343.0 731.2,1345.6 742.2,1349.7 753.3,1345.1 764.4,1347.0 775.5,1347.5 786.5,1348.4 797.6,1346.3 808.7,1344.9 819.8,1345.8 830.8,1345.1 841.9,1344.9 853.0,1345.1 864.1,1343.8 875.1,1346.7 886.2,1344.1 897.3,1347.8 908.4,1346.2 919.5,1344.2 930.5,1345.3 941.6,1342.1 952.7,1350.8 963.8,1343.9 974.8,1344.6 985.9,1347.2 997.0,1346.2 1008.1,1343.2 1019.1,1342.3 1030.2,1346.8 1041.3,1346.3 1052.4,1345.6 1063.4,1344.5 1074.5,1344.4 1085.6,1340.4 1096.7,1343.8 1107.7,1345.8 1118.8,1345.5 1129.9,1345.4 1141.0,1344.4 1152.0,1345.9 1163.1,1346.7 1174.2,1348.6 1185.3,1349.5 1196.3,1345.6 1207.4,1345.1 1218.5,1344.6 1229.6,1344.7 1240.6,1345.3 1251.7,1344.7 1262.8,1343.6 1273.9,1344.9 1284.9,1345.0 1296.0,1342.4 1307.1,1343.0 1318.2,1340.0 1329.3,1348.8 1340.3,1342.6 1351.4,1347.6 1362.5,1347.3 1373.6,1342.9 1384.6,1346.1 1395.7,1346.4 1406.8,1342.4 1417.9,1345.5 1428.9,1346.1 1440.0,1345.3 1451.1,1346.4 1462.2,1348.5 1473.2,1347.1 1484.3,1346.1 1495.4,1343.4 1506.5,1345.4 1517.5,1343.6 1528.6,1346.7 1539.7,1343.9 1550.8,1344.9 1561.8,1344.2 1572.9,1345.8 1584.0,1343.0 1595.1,1345.1 1606.1,1346.2 1617.2,1343.8 1628.3,1345.2 1639.4,1344.9 1650.4,1345.5 1661.5,1344.6 1672.6,1345.3 1683.7,1345.3 1694.7,1345.0 1705.8,1344.8 1716.9,1346.0 1728.0,1347.5 1739.1,1342.9 1750.1,1345.1 1761.2,1347.6 1772.3,1347.8 1783.4,1344.5 1794.4,1344.7 1805.5,1345.5 1816.6,1342.5 1827.7,1348.1 1838.7,1347.5 1849.8,1345.3 1860.9,1345.0 1872.0,1346.0 1883.0,1347.0 1894.1,1346.2 1905.2,1348.5 1916.3,1348.0 1927.3,1343.5 1938.4,1342.9 1949.5,1346.3 1960.6,1348.1 1971.6,1344.1 1982.7,1346.3 1993.8,1348.4 2004.9,1345.9 2015.9,1346.3 2027.0,1347.3 2038.1,1345.9 2049.2,1343.9 2060.2,1346.5 2071.3,1345.9 2082.4,1343.9 2093.5,1343.4 2104.5,1342.7 2115.6,1345.6 2126.7,1347.8 2137.8,1345.4 2148.9,1345.4 2159.9,1347.0 2171.0,1343.7 2182.1,1347.3 2193.2,1345.1 2204.2,1345.4 2215.3,1343.3 2226.4,1346.3 2237.5,1345.1 2248.5,1347.7 2259.6,1345.6 2270.7,1344.0 2281.8,1346.1 2292.8,1345.7 2303.9,1349.5 2315.0,1342.6 2326.1,1342.8 2337.1,1345.1 2348.2,1345.3 2359.3,1346.9 2370.4,1345.0 2381.4,1349.2 2392.5,1346.5 2403.6,1345.2 2414.7,1349.7 2425.7,1347.4 2436.8,1343.6 2447.9,1346.9 2459.0,1343.7 2470.0,1343.9 2481.1,1344.6 2492.2,1342.2 2503.3,1345.6 2514.4,1345.3 2525.4,1345.6 2536.5,1346.9 2547.6,1346.5 2558.7,1345.6 2569.7,1348.8 2580.8,1343.1 2591.9,1344.3 2603.0,1348.6 2614.0,1345.6 2625.1,1343.1 2636.2,1342.6 2647.3,1347.9 2658.3,1343.7 2669.4,1344.8 2680.5,1345.1 2691.6,1346.4 2702.6,1342.9 2713.7,1347.2 2724.8,1344.6 2735.9,1345.7 2746.9,1344.1 2758.0,1345.6 2769.1,1344.6 2780.2,1343.9 2791.2,1346.8 2802.3,1344.0 2813.4,1345.4 2824.5,1344.9 2835.5,1342.2 2846.6,1344.7 2857.7,1349.1 2868.8,1344.0 2879.8,1344.4 2890.9,1345.2 2902.0,1342.6" fill="none" stroke="#5cc08a" stroke-width="3.5" stroke-linejoin="round" opacity="1.0"/><polyline points="122.0,1332.6 133.1,1332.2 144.2,1329.9 155.2,1332.5 166.3,1333.1 177.4,1333.4 188.5,1334.9 199.5,1328.8 210.6,1324.2 221.7,1333.1 232.8,1331.7 243.8,1331.1 254.9,1334.4 266.0,1331.9 277.1,1330.6 288.1,1331.8 299.2,1335.6 310.3,1333.6 321.4,1334.6 332.4,1335.7 343.5,1332.3 354.6,1330.6 365.7,1333.1 376.7,1335.6 387.8,1332.7 398.9,1332.5 410.0,1328.3 421.0,1329.3 432.1,1330.1 443.2,1330.1 454.3,1333.3 465.3,1335.3 476.4,1332.1 487.5,1332.3 498.6,1334.1 509.6,1332.5 520.7,1332.9 531.8,1333.9 542.9,1330.1 554.0,1333.6 565.0,1331.2 576.1,1324.2 587.2,1328.6 598.3,1328.5 609.3,1328.6 620.4,1331.1 631.5,1332.3 642.6,1334.4 653.6,1332.6 664.7,1327.6 675.8,1333.7 686.9,1332.6 697.9,1329.6 709.0,1333.5 720.1,1334.1 731.2,1330.6 742.2,1330.6 753.3,1334.8 764.4,1331.9 775.5,1333.9 786.5,1326.5 797.6,1330.7 808.7,1332.2 819.8,1330.4 830.8,1332.5 841.9,1329.8 853.0,1337.6 864.1,1330.0 875.1,1333.5 886.2,1332.9 897.3,1327.1 908.4,1326.9 919.5,1329.4 930.5,1330.1 941.6,1331.6 952.7,1330.5 963.8,1334.1 974.8,1329.9 985.9,1330.4 997.0,1333.2 1008.1,1334.0 1019.1,1332.3 1030.2,1329.3 1041.3,1334.6 1052.4,1334.2 1063.4,1337.0 1074.5,1333.4 1085.6,1329.1 1096.7,1335.4 1107.7,1329.2 1118.8,1330.8 1129.9,1332.3 1141.0,1332.6 1152.0,1330.1 1163.1,1333.1 1174.2,1331.7 1185.3,1329.9 1196.3,1330.9 1207.4,1334.6 1218.5,1334.5 1229.6,1331.9 1240.6,1330.9 1251.7,1332.1 1262.8,1333.5 1273.9,1332.8 1284.9,1335.4 1296.0,1331.4 1307.1,1332.2 1318.2,1331.5 1329.3,1331.6 1340.3,1330.4 1351.4,1334.5 1362.5,1331.2 1373.6,1331.1 1384.6,1335.5 1395.7,1331.1 1406.8,1330.1 1417.9,1329.1 1428.9,1330.5 1440.0,1327.7 1451.1,1333.5 1462.2,1333.9 1473.2,1336.2 1484.3,1333.9 1495.4,1331.7 1506.5,1331.2 1517.5,1335.9 1528.6,1333.5 1539.7,1334.8 1550.8,1330.4 1561.8,1329.7 1572.9,1330.6 1584.0,1332.6 1595.1,1328.7 1606.1,1330.1 1617.2,1332.2 1628.3,1336.2 1639.4,1332.1 1650.4,1332.3 1661.5,1333.7 1672.6,1329.8 1683.7,1333.7 1694.7,1331.6 1705.8,1333.5 1716.9,1336.0 1728.0,1327.5 1739.1,1332.6 1750.1,1338.9 1761.2,1332.5 1772.3,1336.4 1783.4,1332.3 1794.4,1303.7 1805.5,1333.3 1816.6,1338.1 1827.7,1329.5 1838.7,1336.5 1849.8,1331.2 1860.9,1332.5 1872.0,1330.9 1883.0,1333.1 1894.1,1333.9 1905.2,1330.5 1916.3,1329.8 1927.3,1333.1 1938.4,1333.4 1949.5,1335.3 1960.6,1328.4 1971.6,1333.5 1982.7,1331.1 1993.8,1331.0 2004.9,1334.4 2015.9,1330.6 2027.0,1333.0 2038.1,1331.7 2049.2,1333.3 2060.2,1331.4 2071.3,1330.9 2082.4,1328.2 2093.5,1332.0 2104.5,1329.8 2115.6,1331.8 2126.7,1333.0 2137.8,1335.6 2148.9,1329.3 2159.9,1332.0 2171.0,1329.6 2182.1,1331.7 2193.2,1332.7 2204.2,1333.3 2215.3,1327.6 2226.4,1327.7 2237.5,1334.1 2248.5,1328.2 2259.6,1332.7 2270.7,1331.4 2281.8,1335.6 2292.8,1333.6 2303.9,1332.8 2315.0,1332.3 2326.1,1330.6 2337.1,1330.8 2348.2,1332.0 2359.3,1330.4 2370.4,1330.3 2381.4,1336.1 2392.5,1331.1 2403.6,1329.5 2414.7,1330.7 2425.7,1331.8 2436.8,1328.4 2447.9,1333.8 2459.0,1332.7 2470.0,1330.2 2481.1,1329.1 2492.2,1331.3 2503.3,1329.4 2514.4,1329.9 2525.4,1336.8 2536.5,1329.1 2547.6,1335.9 2558.7,1333.8 2569.7,1332.1 2580.8,1333.2 2591.9,1333.6 2603.0,1331.3 2614.0,1332.5 2625.1,1333.1 2636.2,1331.4 2647.3,1332.1 2658.3,1334.2 2669.4,1329.8 2680.5,1332.5 2691.6,1333.3 2702.6,1330.7 2713.7,1334.3 2724.8,1334.2 2735.9,1338.8 2746.9,1334.0 2758.0,1328.1 2769.1,1329.2 2780.2,1327.3 2791.2,1328.1 2802.3,1331.7 2813.4,1334.2 2824.5,1331.2 2835.5,1331.9 2846.6,1332.0 2857.7,1326.5 2868.8,1331.8 2879.8,1334.6 2890.9,1334.6 2902.0,1331.8" fill="none" stroke="#c08e86" stroke-width="3.5" stroke-linejoin="round" opacity="1.0"/><polyline points="122.0,1332.6 133.1,1328.1 144.2,1330.5 155.2,1332.3 166.3,1330.0 177.4,1329.8 188.5,1330.4 199.5,1329.6 210.6,1328.5 221.7,1328.2 232.8,1334.3 243.8,1329.8 254.9,1329.6 266.0,1329.6 277.1,1328.7 288.1,1328.6 299.2,1327.9 310.3,1327.4 321.4,1336.9 332.4,1334.0 343.5,1331.3 354.6,1325.0 365.7,1332.0 376.7,1327.0 387.8,1329.3 398.9,1331.7 410.0,1330.3 421.0,1330.0 432.1,1331.7 443.2,1332.2 454.3,1330.4 465.3,1330.5 476.4,1326.8 487.5,1329.8 498.6,1331.6 509.6,1324.2 520.7,1330.8 531.8,1331.4 542.9,1329.1 554.0,1333.7 565.0,1335.3 576.1,1331.7 587.2,1327.2 598.3,1332.4 609.3,1328.6 620.4,1333.1 631.5,1332.1 642.6,1330.8 653.6,1332.3 664.7,1330.6 675.8,1331.7 686.9,1327.2 697.9,1329.6 709.0,1331.2 720.1,1327.8 731.2,1328.6 742.2,1331.2 753.3,1330.7 764.4,1329.8 775.5,1331.4 786.5,1326.9 797.6,1330.5 808.7,1327.3 819.8,1330.3 830.8,1332.0 841.9,1331.9 853.0,1327.1 864.1,1332.1 875.1,1328.0 886.2,1330.0 897.3,1332.9 908.4,1333.5 919.5,1331.9 930.5,1330.6 941.6,1330.1 952.7,1331.4 963.8,1326.3 974.8,1329.6 985.9,1329.5 997.0,1329.2 1008.1,1329.6 1019.1,1327.2 1030.2,1332.9 1041.3,1329.0 1052.4,1330.0 1063.4,1330.6 1074.5,1326.9 1085.6,1330.2 1096.7,1330.8 1107.7,1335.0 1118.8,1326.7 1129.9,1329.9 1141.0,1326.7 1152.0,1334.1 1163.1,1330.4 1174.2,1329.8 1185.3,1333.4 1196.3,1332.1 1207.4,1327.5 1218.5,1326.9 1229.6,1326.3 1240.6,1326.3 1251.7,1330.4 1262.8,1334.7 1273.9,1331.2 1284.9,1330.0 1296.0,1329.3 1307.1,1331.7 1318.2,1333.1 1329.3,1332.9 1340.3,1325.9 1351.4,1326.8 1362.5,1332.3 1373.6,1329.7 1384.6,1328.3 1395.7,1330.8 1406.8,1332.1 1417.9,1331.3 1428.9,1332.3 1440.0,1329.4 1451.1,1329.8 1462.2,1330.0 1473.2,1329.2 1484.3,1327.3 1495.4,1330.2 1506.5,1334.9 1517.5,1331.5 1528.6,1332.2 1539.7,1330.6 1550.8,1331.5 1561.8,1331.5 1572.9,1329.4 1584.0,1332.2 1595.1,1334.4 1606.1,1331.9 1617.2,1332.0 1628.3,1329.6 1639.4,1330.5 1650.4,1333.4 1661.5,1333.3 1672.6,1331.3 1683.7,1331.4 1694.7,1332.0 1705.8,1331.1 1716.9,1329.9 1728.0,1330.3 1739.1,1328.7 1750.1,1328.9 1761.2,1328.7 1772.3,1328.6 1783.4,1329.9 1794.4,1331.6 1805.5,1330.2 1816.6,1330.3 1827.7,1332.4 1838.7,1328.1 1849.8,1329.9 1860.9,1332.5 1872.0,1332.5 1883.0,1328.7 1894.1,1327.7 1905.2,1330.6 1916.3,1331.1 1927.3,1328.2 1938.4,1330.1 1949.5,1325.6 1960.6,1329.0 1971.6,1328.4 1982.7,1331.8 1993.8,1332.8 2004.9,1334.8 2015.9,1331.2 2027.0,1331.4 2038.1,1327.2 2049.2,1329.6 2060.2,1331.0 2071.3,1332.7 2082.4,1328.1 2093.5,1329.2 2104.5,1329.1 2115.6,1334.5 2126.7,1329.9 2137.8,1330.0 2148.9,1330.5 2159.9,1328.0 2171.0,1328.8 2182.1,1329.4 2193.2,1329.5 2204.2,1331.5 2215.3,1332.3 2226.4,1330.0 2237.5,1330.9 2248.5,1325.7 2259.6,1332.5 2270.7,1332.7 2281.8,1330.3 2292.8,1328.5 2303.9,1328.9 2315.0,1330.4 2326.1,1331.9 2337.1,1328.4 2348.2,1329.4 2359.3,1329.8 2370.4,1328.8 2381.4,1330.7 2392.5,1329.7 2403.6,1331.2 2414.7,1334.1 2425.7,1329.9 2436.8,1334.4 2447.9,1326.5 2459.0,1330.7 2470.0,1332.5 2481.1,1329.2 2492.2,1328.2 2503.3,1330.0 2514.4,1330.6 2525.4,1329.9 2536.5,1327.9 2547.6,1329.4 2558.7,1331.1 2569.7,1333.8 2580.8,1329.3 2591.9,1331.1 2603.0,1328.9 2614.0,1332.3 2625.1,1330.8 2636.2,1329.9 2647.3,1328.9 2658.3,1332.4 2669.4,1328.7 2680.5,1329.1 2691.6,1328.7 2702.6,1329.2 2713.7,1331.5 2724.8,1330.1 2735.9,1334.9 2746.9,1331.1 2758.0,1329.3 2769.1,1327.3 2780.2,1329.1 2791.2,1327.4 2802.3,1331.9 2813.4,1330.5 2824.5,1330.5 2835.5,1330.6 2846.6,1331.6 2857.7,1327.6 2868.8,1334.5 2879.8,1331.5 2890.9,1331.2 2902.0,1329.8" fill="none" stroke="#0000b4" stroke-width="4" stroke-linejoin="round" opacity="1.0"/><polyline points="122.0,1315.3 133.1,1312.5 144.2,1303.5 155.2,1309.4 166.3,1313.6 177.4,1313.9 188.5,1308.6 199.5,1312.8 210.6,1308.8 221.7,1315.1 232.8,1306.8 243.8,1306.5 254.9,1315.4 266.0,1313.8 277.1,1307.9 288.1,1314.6 299.2,1316.2 310.3,1315.1 321.4,1309.4 332.4,1308.5 343.5,1313.1 354.6,1314.4 365.7,1305.2 376.7,1311.5 387.8,1317.2 398.9,1312.1 410.0,1308.6 421.0,1308.5 432.1,1305.1 443.2,1311.0 454.3,1312.9 465.3,1313.4 476.4,1307.3 487.5,1309.0 498.6,1309.7 509.6,1307.9 520.7,1311.8 531.8,1310.0 542.9,1309.5 554.0,1312.0 565.0,1306.3 576.1,1310.2 587.2,1310.6 598.3,1308.0 609.3,1311.0 620.4,1315.0 631.5,1305.2 642.6,1317.4 653.6,1310.9 664.7,1306.2 675.8,1311.6 686.9,1308.2 697.9,1310.7 709.0,1307.2 720.1,1315.3 731.2,1309.5 742.2,1303.5 753.3,1311.3 764.4,1308.1 775.5,1309.3 786.5,1303.6 797.6,1313.8 808.7,1312.6 819.8,1310.8 830.8,1309.5 841.9,1310.0 853.0,1304.9 864.1,1312.2 875.1,1314.6 886.2,1312.3 897.3,1312.6 908.4,1307.1 919.5,1309.2 930.5,1305.1 941.6,1313.7 952.7,1313.2 963.8,1309.6 974.8,1309.6 985.9,1304.7 997.0,1310.1 1008.1,1306.0 1019.1,1312.5 1030.2,1310.6 1041.3,1313.6 1052.4,1312.6 1063.4,1310.0 1074.5,1309.8 1085.6,1310.9 1096.7,1308.6 1107.7,1317.0 1118.8,1308.9 1129.9,1305.8 1141.0,1316.3 1152.0,1308.0 1163.1,1308.6 1174.2,1306.5 1185.3,1313.3 1196.3,1310.7 1207.4,1312.0 1218.5,1308.3 1229.6,1314.7 1240.6,1311.8 1251.7,1311.1 1262.8,1311.2 1273.9,1305.9 1284.9,1312.4 1296.0,1315.9 1307.1,1305.7 1318.2,1308.8 1329.3,1310.8 1340.3,1312.2 1351.4,1309.9 1362.5,1310.1 1373.6,1314.8 1384.6,1308.6 1395.7,1306.2 1406.8,1307.3 1417.9,1313.6 1428.9,1311.7 1440.0,1308.8 1451.1,1307.3 1462.2,1309.7 1473.2,1308.5 1484.3,1313.1 1495.4,1309.2 1506.5,1309.4 1517.5,1300.8 1528.6,1312.0 1539.7,1305.3 1550.8,1308.2 1561.8,1303.8 1572.9,1308.7 1584.0,1313.9 1595.1,1309.5 1606.1,1307.9 1617.2,1314.3 1628.3,1313.6 1639.4,1312.2 1650.4,1308.7 1661.5,1315.9 1672.6,1311.1 1683.7,1311.0 1694.7,1318.2 1705.8,1309.8 1716.9,1311.1 1728.0,1309.7 1739.1,1312.1 1750.1,1315.6 1761.2,1314.6 1772.3,1310.3 1783.4,1303.3 1794.4,1308.2 1805.5,1310.6 1816.6,1310.2 1827.7,1302.7 1838.7,1310.2 1849.8,1308.0 1860.9,1302.7 1872.0,1315.6 1883.0,1310.3 1894.1,1304.9 1905.2,1308.1 1916.3,1314.4 1927.3,1312.5 1938.4,1311.9 1949.5,1308.3 1960.6,1310.0 1971.6,1314.0 1982.7,1310.4 1993.8,1315.5 2004.9,1311.1 2015.9,1309.7 2027.0,1311.1 2038.1,1307.9 2049.2,1308.6 2060.2,1304.0 2071.3,1313.5 2082.4,1308.1 2093.5,1306.7 2104.5,1310.3 2115.6,1312.9 2126.7,1305.8 2137.8,1311.0 2148.9,1315.1 2159.9,1310.6 2171.0,1318.9 2182.1,1311.7 2193.2,1309.1 2204.2,1310.5 2215.3,1307.6 2226.4,1309.0 2237.5,1311.8 2248.5,1314.8 2259.6,1315.5 2270.7,1315.1 2281.8,1311.5 2292.8,1304.4 2303.9,1308.0 2315.0,1308.9 2326.1,1310.3 2337.1,1309.5 2348.2,1305.8 2359.3,1311.1 2370.4,1308.5 2381.4,1308.5 2392.5,1305.6 2403.6,1315.3 2414.7,1311.4 2425.7,1308.5 2436.8,1306.0 2447.9,1314.0 2459.0,1310.0 2470.0,1308.3 2481.1,1312.9 2492.2,1311.0 2503.3,1308.7 2514.4,1314.9 2525.4,1308.4 2536.5,1314.9 2547.6,1308.8 2558.7,1305.5 2569.7,1310.1 2580.8,1308.5 2591.9,1313.4 2603.0,1312.6 2614.0,1312.5 2625.1,1314.6 2636.2,1312.7 2647.3,1308.6 2658.3,1310.5 2669.4,1308.6 2680.5,1313.8 2691.6,1313.2 2702.6,1311.3 2713.7,1313.5 2724.8,1310.2 2735.9,1310.4 2746.9,1308.3 2758.0,1311.7 2769.1,1309.1 2780.2,1313.7 2791.2,1309.8 2802.3,1307.1 2813.4,1309.5 2824.5,1306.2 2835.5,1312.5 2846.6,1308.7 2857.7,1313.1 2868.8,1312.3 2879.8,1311.3 2890.9,1313.1 2902.0,1315.7" fill="none" stroke="#7d4dc8" stroke-width="3.5" stroke-linejoin="round" opacity="1.0"/><polyline points="122.0,1308.5 133.1,1290.4 144.2,1298.7 155.2,1299.8 166.3,1300.7 177.4,1299.2 188.5,1290.1 199.5,1295.8 210.6,1292.8 221.7,1298.7 232.8,1299.8 243.8,1300.1 254.9,1295.1 266.0,1296.2 277.1,1291.2 288.1,1294.9 299.2,1295.5 310.3,1293.9 321.4,1295.4 332.4,1297.3 343.5,1301.2 354.6,1293.7 365.7,1299.8 376.7,1292.7 387.8,1300.4 398.9,1299.9 410.0,1300.2 421.0,1299.0 432.1,1302.9 443.2,1305.1 454.3,1289.7 465.3,1301.8 476.4,1307.4 487.5,1304.0 498.6,1300.3 509.6,1304.6 520.7,1297.0 531.8,1297.8 542.9,1298.7 554.0,1288.7 565.0,1291.4 576.1,1303.2 587.2,1301.2 598.3,1298.0 609.3,1305.7 620.4,1290.6 631.5,1297.6 642.6,1289.0 653.6,1302.5 664.7,1301.9 675.8,1298.4 686.9,1294.6 697.9,1298.2 709.0,1289.9 720.1,1294.0 731.2,1297.3 742.2,1300.3 753.3,1301.2 764.4,1289.1 775.5,1280.3 786.5,1303.0 797.6,1285.8 808.7,1304.8 819.8,1301.1 830.8,1302.6 841.9,1294.5 853.0,1305.6 864.1,1294.2 875.1,1294.8 886.2,1295.3 897.3,1303.3 908.4,1306.4 919.5,1288.4 930.5,1293.2 941.6,1295.1 952.7,1295.9 963.8,1300.5 974.8,1296.3 985.9,1296.9 997.0,1299.6 1008.1,1301.6 1019.1,1294.4 1030.2,1298.1 1041.3,1348.9 1052.4,1306.0 1063.4,1303.1 1074.5,1293.7 1085.6,1298.1 1096.7,1296.2 1107.7,1298.9 1118.8,1300.1 1129.9,1292.6 1141.0,1298.8 1152.0,1303.9 1163.1,1295.5 1174.2,1290.1 1185.3,1298.5 1196.3,1300.7 1207.4,1299.2 1218.5,1297.3 1229.6,1290.5 1240.6,1300.9 1251.7,1302.0 1262.8,1302.0 1273.9,1294.5 1284.9,1297.0 1296.0,1297.8 1307.1,1292.2 1318.2,1298.4 1329.3,1304.7 1340.3,1301.5 1351.4,1302.8 1362.5,1303.3 1373.6,1294.8 1384.6,1306.0 1395.7,1300.5 1406.8,1292.2 1417.9,1304.5 1428.9,1305.1 1440.0,1297.6 1451.1,1304.0 1462.2,1299.4 1473.2,1301.7 1484.3,1297.0 1495.4,1303.1 1506.5,1290.9 1517.5,1302.5 1528.6,1304.2 1539.7,1306.3 1550.8,1300.9 1561.8,1287.5 1572.9,1301.9 1584.0,1302.0 1595.1,1303.0 1606.1,1299.5 1617.2,1296.8 1628.3,1291.3 1639.4,1294.9 1650.4,1296.4 1661.5,1299.2 1672.6,1296.6 1683.7,1295.5 1694.7,1295.4 1705.8,1300.5 1716.9,1298.2 1728.0,1300.0 1739.1,1293.4 1750.1,1298.3 1761.2,1300.4 1772.3,1305.0 1783.4,1300.5 1794.4,1293.8 1805.5,1295.7 1816.6,1301.5 1827.7,1299.0 1838.7,1299.6 1849.8,1293.8 1860.9,1295.2 1872.0,1295.9 1883.0,1300.4 1894.1,1294.2 1905.2,1291.8 1916.3,1297.4 1927.3,1291.2 1938.4,1300.4 1949.5,1296.4 1960.6,1302.1 1971.6,1299.1 1982.7,1297.6 1993.8,1308.7 2004.9,1302.8 2015.9,1294.7 2027.0,1301.4 2038.1,1295.5 2049.2,1292.2 2060.2,1298.9 2071.3,1305.3 2082.4,1300.4 2093.5,1299.0 2104.5,1301.7 2115.6,1307.0 2126.7,1295.2 2137.8,1293.6 2148.9,1303.5 2159.9,1288.9 2171.0,1298.2 2182.1,1307.9 2193.2,1301.9 2204.2,1294.1 2215.3,1293.3 2226.4,1296.2 2237.5,1300.7 2248.5,1299.4 2259.6,1297.4 2270.7,1298.4 2281.8,1298.9 2292.8,1303.4 2303.9,1297.8 2315.0,1294.2 2326.1,1289.1 2337.1,1295.0 2348.2,1299.3 2359.3,1300.1 2370.4,1299.8 2381.4,1295.0 2392.5,1296.5 2403.6,1295.5 2414.7,1294.9 2425.7,1299.9 2436.8,1297.2 2447.9,1303.3 2459.0,1302.7 2470.0,1304.0 2481.1,1301.5 2492.2,1299.2 2503.3,1292.9 2514.4,1306.7 2525.4,1289.4 2536.5,1301.9 2547.6,1301.0 2558.7,1299.7 2569.7,1288.6 2580.8,1299.5 2591.9,1298.5 2603.0,1303.4 2614.0,1294.3 2625.1,1298.0 2636.2,1302.6 2647.3,1299.7 2658.3,1299.1 2669.4,1299.6 2680.5,1297.7 2691.6,1300.3 2702.6,1292.3 2713.7,1291.9 2724.8,1292.6 2735.9,1301.0 2746.9,1300.4 2758.0,1296.3 2769.1,1299.0 2780.2,1301.3 2791.2,1300.5 2802.3,1298.1 2813.4,1295.0 2824.5,1298.8 2835.5,1304.7 2846.6,1295.8 2857.7,1295.4 2868.8,1295.8 2879.8,1301.4 2890.9,1304.5 2902.0,1294.8" fill="none" stroke="#7f4512" stroke-width="3.5" stroke-linejoin="round" opacity="1.0"/><polyline points="122.0,1267.3 133.1,1266.8 144.2,1265.3 155.2,1268.2 166.3,1271.5 177.4,1268.9 188.5,1271.0 199.5,1265.4 210.6,1268.1 221.7,1265.7 232.8,1272.2 243.8,1269.8 254.9,1267.0 266.0,1274.4 277.1,1270.5 288.1,1272.6 299.2,1270.3 310.3,1263.3 321.4,1269.0 332.4,1271.5 343.5,1267.7 354.6,1256.0 365.7,1270.3 376.7,1266.1 387.8,1270.7 398.9,1266.2 410.0,1264.7 421.0,1268.0 432.1,1267.3 443.2,1269.3 454.3,1270.1 465.3,1273.5 476.4,1266.2 487.5,1269.3 498.6,1269.7 509.6,1269.5 520.7,1265.8 531.8,1265.1 542.9,1268.0 554.0,1267.1 565.0,1267.1 576.1,1272.9 587.2,1270.8 598.3,1271.9 609.3,1265.4 620.4,1271.9 631.5,1279.4 642.6,1262.2 653.6,1271.1 664.7,1269.4 675.8,1271.2 686.9,1262.4 697.9,1268.6 709.0,1272.6 720.1,1270.7 731.2,1270.8 742.2,1268.4 753.3,1267.4 764.4,1270.2 775.5,1272.2 786.5,1265.7 797.6,1272.6 808.7,1273.0 819.8,1265.9 830.8,1269.7 841.9,1265.4 853.0,1268.9 864.1,1272.8 875.1,1267.2 886.2,1268.2 897.3,1267.3 908.4,1273.1 919.5,1261.9 930.5,1266.6 941.6,1270.5 952.7,1265.6 963.8,1263.9 974.8,1266.2 985.9,1269.4 997.0,1267.1 1008.1,1266.1 1019.1,1268.7 1030.2,1268.4 1041.3,1265.3 1052.4,1269.0 1063.4,1268.7 1074.5,1272.3 1085.6,1265.0 1096.7,1268.3 1107.7,1271.4 1118.8,1271.5 1129.9,1265.8 1141.0,1265.7 1152.0,1272.9 1163.1,1263.6 1174.2,1266.7 1185.3,1268.3 1196.3,1267.1 1207.4,1269.4 1218.5,1266.2 1229.6,1268.7 1240.6,1268.6 1251.7,1264.8 1262.8,1273.2 1273.9,1266.3 1284.9,1267.0 1296.0,1271.1 1307.1,1269.6 1318.2,1264.3 1329.3,1269.1 1340.3,1268.7 1351.4,1267.0 1362.5,1272.4 1373.6,1270.7 1384.6,1268.0 1395.7,1272.2 1406.8,1276.6 1417.9,1273.4 1428.9,1267.0 1440.0,1267.1 1451.1,1270.0 1462.2,1269.8 1473.2,1268.9 1484.3,1270.1 1495.4,1271.0 1506.5,1295.8 1517.5,1275.1 1528.6,1275.7 1539.7,1270.9 1550.8,1269.7 1561.8,1266.9 1572.9,1266.7 1584.0,1274.1 1595.1,1268.2 1606.1,1269.2 1617.2,1267.6 1628.3,1264.1 1639.4,1267.8 1650.4,1263.3 1661.5,1271.6 1672.6,1266.1 1683.7,1270.0 1694.7,1270.8 1705.8,1269.6 1716.9,1267.0 1728.0,1270.2 1739.1,1265.7 1750.1,1261.8 1761.2,1265.6 1772.3,1269.6 1783.4,1264.6 1794.4,1271.1 1805.5,1267.1 1816.6,1266.2 1827.7,1272.1 1838.7,1267.2 1849.8,1269.2 1860.9,1271.4 1872.0,1268.7 1883.0,1268.4 1894.1,1269.0 1905.2,1268.1 1916.3,1265.1 1927.3,1269.1 1938.4,1273.2 1949.5,1268.6 1960.6,1265.5 1971.6,1271.7 1982.7,1269.6 1993.8,1265.2 2004.9,1266.8 2015.9,1264.6 2027.0,1270.2 2038.1,1264.8 2049.2,1267.4 2060.2,1266.2 2071.3,1271.9 2082.4,1270.5 2093.5,1266.4 2104.5,1264.3 2115.6,1264.8 2126.7,1270.5 2137.8,1269.8 2148.9,1264.5 2159.9,1268.8 2171.0,1265.3 2182.1,1276.6 2193.2,1270.5 2204.2,1271.9 2215.3,1267.5 2226.4,1267.5 2237.5,1267.5 2248.5,1270.4 2259.6,1272.9 2270.7,1268.7 2281.8,1265.4 2292.8,1268.9 2303.9,1269.8 2315.0,1265.2 2326.1,1265.9 2337.1,1271.6 2348.2,1268.5 2359.3,1262.6 2370.4,1266.4 2381.4,1263.6 2392.5,1266.5 2403.6,1268.0 2414.7,1267.3 2425.7,1261.5 2436.8,1266.7 2447.9,1266.6 2459.0,1271.8 2470.0,1269.0 2481.1,1265.6 2492.2,1267.5 2503.3,1266.2 2514.4,1268.7 2525.4,1267.5 2536.5,1271.6 2547.6,1271.8 2558.7,1267.4 2569.7,1265.3 2580.8,1274.9 2591.9,1269.3 2603.0,1267.4 2614.0,1280.3 2625.1,1267.0 2636.2,1268.0 2647.3,1273.5 2658.3,1268.6 2669.4,1264.8 2680.5,1270.5 2691.6,1266.4 2702.6,1266.6 2713.7,1269.4 2724.8,1270.7 2735.9,1267.3 2746.9,1264.6 2758.0,1264.9 2769.1,1266.7 2780.2,1264.1 2791.2,1262.3 2802.3,1275.0 2813.4,1271.6 2824.5,1272.7 2835.5,1264.3 2846.6,1270.7 2857.7,1265.6 2868.8,1269.3 2879.8,1268.9 2890.9,1267.8 2902.0,1268.5" fill="none" stroke="#3a7d44" stroke-width="3.5" stroke-linejoin="round" opacity="1.0"/><polyline points="122.2,961.5 134.5,956.6 145.3,953.9 154.8,979.2 165.7,959.3 176.6,957.2 188.8,950.7 199.7,967.5 210.5,957.2 221.4,959.3 233.6,968.9 244.5,961.5 255.4,958.8 266.2,951.2 277.1,958.0 288.0,1002.3 300.2,960.7 311.1,961.5 322.0,958.8 332.8,958.0 343.7,955.3 354.6,1009.6 365.4,997.4 376.3,964.8 387.2,981.1 399.4,958.0 410.3,960.7 421.1,948.5 432.0,959.3 442.9,985.2 453.8,955.3 466.0,970.8 476.8,965.3 487.7,955.3 498.6,958.0 509.5,964.8 520.3,996.0 531.2,956.6 542.1,963.4 554.3,959.3 565.2,960.7 576.0,956.6 586.9,963.4 597.8,991.4 608.6,956.6 620.9,956.1 631.7,970.2 642.6,959.3 653.5,947.9 664.3,963.4 675.2,1000.7 686.1,952.6 697.0,957.2 707.8,962.1 718.7,962.6 729.6,956.1 740.4,958.8 752.7,997.4 763.5,951.2 774.4,959.3 786.6,942.5 797.5,956.6 810.0,956.6 820.9,961.5 831.7,967.5 842.6,953.9 853.5,951.2 864.3,959.3 875.2,967.5 886.1,953.9 897.0,970.2 907.8,973.5 918.7,949.8 929.6,956.1 941.8,951.7 952.7,961.5 963.5,953.9 974.4,967.5 986.6,975.1 997.5,968.9 1008.4,967.0 1019.2,947.1 1030.1,957.2 1041.0,959.3 1051.8,975.1 1062.7,971.6 1074.9,959.3 1085.8,960.7 1096.7,952.6 1107.6,949.8 1118.4,1011.0 1129.3,964.8 1141.5,972.9 1152.4,962.6 1163.3,959.3 1174.1,955.3 1185.0,953.9 1195.9,998.8 1206.7,966.1 1219.0,970.2 1229.8,957.2 1240.7,961.5 1251.6,952.6 1262.4,951.2 1273.3,926.7 1284.2,953.4 1295.1,974.3 1305.9,956.6 1318.2,958.8 1329.0,959.3 1339.9,959.3 1350.8,994.7 1361.6,952.6 1372.5,966.1 1383.4,953.9 1394.2,956.6 1406.5,958.8 1417.3,959.3 1428.2,997.4 1439.1,956.6 1449.9,960.7 1462.2,966.1 1473.0,963.4 1483.9,962.1 1494.8,967.5 1505.7,1089.8 1516.8,947.1 1527.7,958.0 1539.9,962.6 1550.8,959.3 1561.6,947.9 1572.5,963.4 1583.4,1004.2 1594.2,955.3 1605.1,953.9 1617.3,948.5 1628.2,958.8 1639.1,953.9 1649.9,964.8 1660.8,972.4 1673.0,955.3 1683.9,967.5 1694.8,952.6 1705.7,956.6 1716.5,957.2 1727.4,962.6 1738.3,981.6 1749.1,957.2 1760.0,957.2 1772.2,946.3 1783.1,951.2 1794.0,947.9 1804.8,964.8 1815.7,969.7 1826.6,955.3 1837.4,955.3 1849.7,942.5 1860.5,963.4 1871.4,961.5 1882.3,962.1 1893.2,973.5 1904.0,958.0 1914.9,957.2 1925.8,957.2 1938.0,956.6 1948.9,1021.8 1959.7,967.5 1970.6,986.0 1981.5,951.7 1992.3,958.0 2003.2,943.0 2015.4,952.6 2026.3,1011.0 2037.2,961.5 2048.0,970.8 2058.9,964.8 2069.8,958.8 2080.7,949.0 2091.5,950.7 2103.8,991.4 2114.6,953.9 2125.5,981.1 2136.4,960.7 2147.2,966.1 2158.1,956.1 2170.3,956.1 2181.2,995.2 2192.1,952.6 2202.9,983.8 2215.4,960.7 2226.3,953.9 2237.2,954.5 2248.0,951.7 2258.9,1006.9 2269.8,956.1 2282.0,962.1 2292.9,960.7 2303.8,953.4 2314.6,955.3 2325.5,974.3 2336.4,988.7 2347.2,967.0 2358.1,958.8 2369.0,962.1 2379.8,956.1 2390.7,953.9 2402.9,962.1 2413.8,1002.8 2424.7,956.6 2435.5,961.5 2446.4,948.5 2457.3,959.9 2469.5,957.2 2480.4,959.3 2491.2,972.4 2502.1,955.3 2513.0,958.8 2525.2,948.5 2536.1,964.2 2547.0,957.2 2557.8,959.9 2568.7,975.1 2579.6,968.9 2590.4,953.9 2601.3,956.1 2612.2,950.7 2624.4,958.8 2635.3,963.4 2646.1,971.6 2657.0,960.7 2669.2,968.9 2680.1,947.1 2691.0,953.9 2701.8,956.6 2712.7,959.3 2723.6,972.4 2734.5,953.9 2746.7,949.8 2757.6,952.6 2768.4,956.1 2779.3,983.3 2790.2,970.2 2801.0,966.1 2811.9,962.6 2822.8,964.8 2835.0,959.3 2845.9,956.1 2856.7,1008.3 2867.6,958.0 2878.5,977.8 2889.3,956.1 2901.6,958.8" fill="none" stroke="#3a8a28" stroke-width="3.5" stroke-linejoin="round"/><polyline points="122.2,924.0 133.1,949.8 144.0,919.1 154.8,941.7 165.7,915.3 176.6,920.8 188.8,913.7 199.7,915.9 210.5,953.4 221.4,919.9 233.6,944.4 244.5,919.1 255.4,930.8 266.2,924.0 277.1,917.2 288.0,947.1 300.2,919.9 311.1,947.1 322.0,913.2 332.8,928.1 343.7,925.4 354.6,936.2 365.4,1031.4 376.3,913.2 387.2,928.9 399.4,913.2 410.3,915.9 421.1,916.4 432.0,911.0 442.9,940.9 453.8,919.9 466.0,935.4 476.8,924.0 487.7,922.7 498.6,964.8 509.5,919.9 520.3,944.4 531.2,921.3 542.1,932.7 554.3,918.6 565.2,920.8 576.0,1026.7 586.9,909.1 597.8,958.0 608.6,926.7 620.9,939.0 631.7,921.3 642.6,920.8 653.5,949.0 664.3,919.9 675.2,957.2 686.1,930.8 697.0,932.7 707.8,919.1 718.7,925.4 730.9,947.1 741.8,915.9 752.7,946.3 763.5,922.7 774.4,933.5 786.6,918.0 797.5,918.6 810.0,930.8 820.9,920.8 831.7,921.8 842.6,919.9 853.5,936.2 864.3,913.2 875.2,922.7 886.1,939.0 897.0,917.2 907.8,932.2 918.7,924.0 929.6,937.6 941.8,917.2 952.7,917.2 963.5,941.7 974.4,913.2 986.6,926.7 997.5,919.9 1008.4,932.7 1019.2,915.9 1030.1,920.8 1041.0,1205.0 1049.1,918.6 1062.7,926.7 1074.9,919.9 1085.8,923.5 1096.7,912.6 1107.6,918.6 1118.4,948.5 1129.3,923.5 1141.5,936.2 1152.4,923.5 1163.3,921.3 1174.1,921.3 1185.0,922.7 1195.9,966.1 1206.7,914.5 1219.0,923.5 1229.8,918.6 1240.7,928.9 1251.6,914.5 1262.4,919.9 1273.3,953.9 1284.2,925.4 1295.1,919.9 1305.9,914.5 1318.2,926.7 1329.0,947.1 1339.9,920.8 1350.8,950.7 1361.6,934.9 1372.5,929.5 1383.4,924.0 1394.2,919.9 1406.5,953.9 1417.3,925.4 1428.2,944.4 1439.1,921.8 1449.9,929.5 1462.2,921.8 1473.0,915.9 1483.9,952.6 1494.8,919.9 1507.3,953.9 1516.8,926.7 1527.7,940.3 1539.9,923.5 1550.8,919.9 1561.6,944.4 1572.5,918.6 1583.4,956.6 1594.2,922.7 1605.1,934.3 1617.3,911.0 1628.2,924.0 1639.1,955.3 1649.9,918.0 1660.8,919.1 1673.0,922.7 1683.9,935.4 1694.8,919.1 1705.7,917.2 1716.5,945.8 1727.4,918.6 1738.3,939.0 1749.1,922.7 1760.0,934.9 1772.2,918.6 1783.1,918.0 1794.0,948.5 1804.8,920.8 1815.7,933.5 1826.6,925.4 1837.4,934.9 1849.7,920.8 1860.5,920.8 1871.4,953.9 1882.3,919.9 1893.2,926.7 1904.0,921.8 1914.9,937.1 1925.8,919.1 1938.0,919.9 1948.9,959.3 1959.7,919.1 1970.6,930.0 1981.5,916.4 1992.3,923.5 2003.2,912.6 2015.4,924.0 2026.3,972.9 2037.2,919.9 2048.0,939.0 2058.9,919.9 2069.8,916.4 2080.7,920.8 2091.5,917.2 2103.8,985.2 2114.6,925.4 2125.5,930.0 2136.4,913.7 2147.2,932.2 2158.1,949.0 2170.3,916.4 2181.2,970.2 2192.1,921.3 2202.9,937.6 2215.4,920.8 2226.3,930.8 2237.2,961.5 2248.0,913.2 2258.9,968.9 2269.8,917.2 2282.0,937.1 2292.9,928.1 2303.8,919.9 2314.6,952.6 2325.5,920.8 2336.4,940.9 2347.2,924.0 2358.1,930.8 2369.0,916.4 2379.8,919.9 2390.7,951.7 2402.9,914.5 2413.8,943.6 2424.7,922.7 2435.5,933.5 2446.4,919.1 2457.3,928.9 2469.5,946.3 2480.4,915.3 2491.2,928.1 2502.1,923.5 2513.0,926.7 2525.2,917.2 2536.1,930.0 2547.0,950.7 2557.8,914.5 2568.7,923.5 2579.6,924.6 2590.4,926.7 2601.3,918.0 2612.2,920.8 2624.4,956.6 2635.3,921.3 2646.1,923.5 2657.0,921.3 2669.2,918.0 2680.1,920.8 2691.0,917.2 2701.8,949.0 2712.7,917.2 2723.6,927.3 2734.5,918.0 2746.7,932.7 2757.6,913.7 2768.4,919.9 2779.3,967.0 2790.2,913.7 2801.0,930.8 2811.9,919.1 2822.8,923.5 2835.0,916.4 2845.9,921.8 2856.7,953.9 2867.6,920.8 2878.5,925.4 2889.3,918.0 2901.6,937.6" fill="none" stroke="#3a88c8" stroke-width="3.5" stroke-linejoin="round"/><polyline points="122.2,896.8 133.1,902.3 144.0,881.9 154.8,880.0 165.7,884.6 176.6,891.4 188.8,881.1 199.7,886.0 210.5,895.5 221.4,883.3 233.6,884.6 244.5,887.3 255.4,892.8 266.2,878.4 277.1,883.8 288.0,890.1 300.2,898.2 311.1,893.6 322.0,881.1 332.8,887.3 343.7,886.5 354.6,898.2 365.4,894.1 376.3,883.8 387.2,886.0 399.4,884.6 410.3,888.2 421.1,882.7 432.0,883.3 442.9,898.2 453.8,893.6 466.0,893.6 476.8,892.8 487.7,886.5 498.6,896.8 509.5,887.3 520.3,897.4 531.2,887.3 542.1,887.3 554.3,883.8 565.2,889.2 576.0,888.2 586.9,891.4 597.8,895.5 608.6,899.0 620.9,896.8 631.7,890.1 642.6,884.6 653.5,902.3 664.3,882.7 675.2,892.8 686.1,890.1 697.0,888.7 707.8,883.8 718.7,886.0 730.9,909.1 741.8,890.1 752.7,898.2 763.5,890.9 774.4,887.3 786.6,882.7 797.5,891.4 810.0,890.1 820.9,888.2 831.7,889.2 842.6,888.7 853.5,886.5 864.3,894.1 875.2,899.6 886.1,907.7 897.0,886.5 907.8,886.5 918.7,890.1 929.6,893.6 941.8,887.3 952.7,883.8 963.5,905.5 974.4,886.5 986.6,883.8 997.5,894.1 1008.4,901.7 1019.2,888.7 1030.1,882.7 1041.0,887.3 1051.8,892.8 1062.7,890.9 1074.9,886.5 1085.8,890.1 1096.7,882.7 1107.6,883.8 1118.4,896.3 1129.3,894.1 1141.5,898.2 1152.4,887.3 1163.3,886.5 1174.1,883.8 1185.0,887.3 1195.9,896.8 1206.7,884.6 1219.0,887.3 1229.8,890.9 1240.7,884.6 1251.6,883.8 1262.4,882.7 1273.3,922.7 1284.2,898.2 1295.1,888.2 1305.9,890.1 1318.2,886.5 1329.0,903.6 1339.9,886.0 1350.8,892.8 1361.6,884.6 1372.5,883.8 1383.4,886.5 1394.2,881.1 1406.5,910.4 1417.3,894.1 1428.2,905.0 1439.1,892.0 1449.9,888.2 1462.2,888.2 1473.0,884.6 1483.9,898.2 1494.8,889.2 1510.0,899.6 1516.8,884.6 1527.7,887.3 1539.9,888.2 1550.8,883.8 1561.6,904.5 1572.5,884.6 1583.4,895.5 1594.2,887.3 1605.1,885.4 1617.3,886.0 1628.2,890.1 1639.1,906.4 1649.9,896.8 1660.8,892.0 1673.0,888.7 1683.9,893.6 1694.8,883.8 1705.7,884.6 1716.5,897.4 1727.4,886.5 1738.3,900.9 1749.1,886.5 1760.0,892.0 1772.2,886.5 1783.1,881.9 1794.0,900.9 1804.8,884.6 1815.7,887.3 1826.6,886.0 1837.4,890.9 1849.7,888.2 1860.5,893.6 1871.4,907.7 1882.3,883.8 1893.2,882.7 1904.0,894.1 1914.9,886.5 1925.8,889.2 1938.0,885.4 1948.9,896.3 1959.7,886.0 1970.6,893.6 1981.5,894.1 1992.3,890.1 2003.2,888.2 2015.4,894.7 2026.3,903.6 2037.2,896.3 2048.0,894.1 2058.9,884.6 2069.8,885.4 2080.7,883.8 2091.5,884.6 2103.8,897.4 2114.6,890.9 2125.5,884.6 2136.4,883.3 2147.2,884.6 2158.1,895.5 2170.3,881.1 2181.2,897.4 2192.1,887.3 2202.9,906.4 2215.4,897.4 2226.3,888.7 2237.2,900.9 2248.0,891.4 2258.9,898.2 2269.8,889.2 2282.0,884.6 2292.9,889.2 2303.8,886.0 2314.6,904.5 2325.5,881.1 2336.4,890.1 2347.2,890.1 2358.1,884.6 2369.0,893.6 2379.8,886.5 2390.7,903.6 2402.9,892.8 2413.8,909.1 2424.7,892.0 2435.5,890.9 2446.4,883.8 2457.3,884.6 2469.5,900.9 2480.4,879.2 2491.2,880.0 2502.1,889.2 2513.0,888.7 2525.2,886.5 2536.1,883.8 2547.0,902.3 2557.8,882.7 2568.7,884.6 2579.6,890.9 2590.4,896.3 2601.3,889.2 2612.2,886.0 2624.4,913.2 2635.3,890.1 2646.1,885.4 2657.0,888.7 2669.2,894.7 2680.1,882.7 2691.0,884.6 2701.8,899.0 2712.7,879.2 2723.6,885.4 2734.5,883.3 2746.7,890.1 2757.6,889.2 2768.4,882.7 2779.3,892.8 2790.2,879.2 2801.0,890.9 2811.9,900.9 2822.8,886.5 2835.0,887.3 2845.9,884.6 2856.7,899.0 2867.6,884.6 2878.5,886.5 2889.3,888.7 2901.6,890.1" fill="none" stroke="#7a4a8a" stroke-width="3.5" stroke-linejoin="round"/><polyline points="122.2,873.8 133.1,881.9 144.0,872.9 154.8,874.6 165.7,872.9 176.6,862.9 188.8,876.5 199.7,864.2 210.5,888.7 221.4,871.0 233.6,886.5 244.5,884.6 255.4,869.7 266.2,873.8 277.1,871.0 288.0,879.2 300.2,868.3 311.1,885.4 322.0,875.7 332.8,874.6 343.7,866.4 354.6,871.0 365.4,882.7 376.3,864.8 387.2,884.6 399.4,869.7 410.3,871.0 421.1,869.1 432.0,867.0 442.9,885.4 453.8,866.4 466.0,877.8 476.8,875.7 487.7,866.4 498.6,868.3 509.5,871.0 520.3,873.8 531.2,867.0 542.1,871.0 554.3,871.8 565.2,873.8 576.0,898.2 586.9,871.0 597.8,876.5 608.6,869.1 620.9,871.8 631.7,872.9 642.6,868.3 653.5,871.8 664.3,877.3 675.2,872.9 686.1,875.7 697.0,869.1 707.8,873.8 718.7,867.0 730.9,880.0 741.8,872.4 752.7,873.8 763.5,870.2 774.4,875.7 786.6,857.4 797.5,873.8 810.0,887.3 820.9,867.5 831.7,871.0 842.6,861.5 853.5,870.2 864.3,871.0 875.2,878.4 886.1,875.1 897.0,864.8 907.8,875.1 918.7,869.1 929.6,869.1 941.8,869.7 952.7,869.7 963.5,883.3 974.4,870.2 986.6,871.8 997.5,866.4 1008.4,868.3 1019.2,870.2 1030.1,873.8 1041.0,863.7 1051.8,873.8 1062.7,876.5 1074.9,871.0 1085.8,861.0 1096.7,864.2 1107.6,862.1 1118.4,876.5 1129.3,867.0 1141.5,864.8 1152.4,873.8 1163.3,868.3 1174.1,867.5 1185.0,873.8 1195.9,884.6 1206.7,865.6 1219.0,869.7 1229.8,877.8 1240.7,868.3 1251.6,864.8 1262.4,861.0 1273.3,890.1 1284.2,867.5 1295.1,895.5 1305.9,878.4 1318.2,864.8 1329.0,877.8 1339.9,875.1 1350.8,883.8 1361.6,864.8 1372.5,865.6 1383.4,876.5 1394.2,868.3 1406.5,876.5 1417.3,873.8 1428.2,875.7 1439.1,872.4 1449.9,875.1 1462.2,871.0 1473.0,872.9 1483.9,880.5 1494.8,875.1 1510.0,869.1 1520.9,868.3 1531.7,869.7 1542.6,871.8 1550.8,873.8 1561.6,868.3 1572.5,871.0 1583.4,883.3 1594.2,865.6 1605.1,875.1 1617.3,876.5 1628.2,867.0 1639.1,879.2 1649.9,872.4 1660.8,863.7 1673.0,875.7 1683.9,872.9 1694.8,866.4 1705.7,871.0 1716.5,871.8 1727.4,875.7 1738.3,874.6 1749.1,869.1 1760.0,869.7 1772.2,862.9 1783.1,875.1 1792.9,614.0 1803.5,871.0 1815.7,864.8 1826.6,865.6 1837.4,859.3 1849.7,861.0 1860.5,861.0 1871.4,880.0 1882.3,873.8 1893.2,872.4 1904.0,858.8 1914.9,872.9 1925.8,872.4 1938.0,872.4 1948.9,886.0 1959.7,883.3 1970.6,871.0 1981.5,863.7 1992.3,866.4 2003.2,852.0 2015.4,868.3 2026.3,886.5 2037.2,866.4 2048.0,871.0 2058.9,880.5 2069.8,877.3 2080.7,871.0 2091.5,877.8 2103.8,880.5 2114.6,869.7 2125.5,869.7 2136.4,861.5 2147.2,873.8 2158.1,875.7 2170.3,871.0 2181.2,883.3 2192.1,868.3 2202.9,881.9 2215.4,861.0 2226.3,862.1 2237.2,869.7 2248.0,870.2 2258.9,882.7 2269.8,880.0 2282.0,866.4 2292.9,865.6 2303.8,874.6 2314.6,868.3 2325.5,872.9 2336.4,875.7 2347.2,866.4 2358.1,861.5 2369.0,879.2 2379.8,867.0 2390.7,871.0 2402.9,877.8 2413.8,894.1 2424.7,867.5 2435.5,872.4 2446.4,861.5 2457.3,881.9 2469.5,884.6 2480.4,875.1 2491.2,877.3 2502.1,862.1 2513.0,862.1 2525.2,868.3 2536.1,876.5 2547.0,875.7 2557.8,864.8 2568.7,871.8 2579.6,867.5 2590.4,865.6 2601.3,868.3 2612.2,871.0 2624.4,861.5 2635.3,872.9 2646.1,875.7 2657.0,883.3 2669.2,867.5 2680.1,861.5 2691.0,873.8 2701.8,871.8 2712.7,877.8 2723.6,885.4 2734.5,887.3 2746.7,867.5 2757.6,866.4 2768.4,868.3 2779.3,859.3 2790.2,872.4 2801.0,878.4 2811.9,872.4 2822.8,875.1 2835.0,877.3 2845.9,862.9 2856.7,871.0 2867.6,873.8 2878.5,889.2 2889.3,871.8 2901.6,867.5" fill="none" stroke="#8cc152" stroke-width="3.5" stroke-linejoin="round"/><polyline points="122.0,823.0 133.1,821.8 144.2,822.5 155.2,821.2 166.3,826.5 177.4,825.1 188.5,821.3 199.5,824.8 210.6,824.2 221.7,819.9 232.8,822.4 243.8,822.3 254.9,820.4 266.0,825.0 277.1,826.2 288.1,825.4 299.2,824.3 310.3,825.0 321.4,822.0 332.4,822.3 343.5,823.9 354.6,825.0 365.7,823.2 376.7,826.1 387.8,821.3 398.9,824.5 410.0,822.8 421.0,822.1 432.1,830.2 443.2,821.6 454.3,823.8 465.3,824.1 476.4,824.4 487.5,826.4 498.6,827.6 509.6,825.5 520.7,826.6 531.8,823.7 542.9,829.7 554.0,824.1 565.0,824.7 576.1,819.9 587.2,825.5 598.3,823.8 609.3,824.7 620.4,825.4 631.5,821.0 642.6,824.4 653.6,821.3 664.7,824.6 675.8,831.3 686.9,825.8 697.9,828.4 709.0,823.2 720.1,824.2 731.2,824.7 742.2,829.6 753.3,824.7 764.4,823.0 775.5,822.3 786.5,824.8 797.6,825.2 808.7,824.3 819.8,827.2 830.8,821.0 841.9,824.7 853.0,824.4 864.1,829.6 875.1,822.2 886.2,818.4 897.3,826.6 908.4,825.2 919.5,825.6 930.5,822.0 941.6,826.7 952.7,823.4 963.8,824.6 974.8,824.1 985.9,822.0 997.0,825.5 1008.1,824.8 1019.1,822.7 1030.2,824.5 1041.3,822.7 1052.4,821.5 1063.4,825.3 1074.5,822.2 1085.6,824.4 1096.7,822.7 1107.7,828.2 1118.8,824.7 1129.9,826.5 1141.0,824.0 1152.0,827.8 1163.1,821.0 1174.2,826.9 1185.3,823.0 1196.3,822.0 1207.4,822.6 1218.5,823.3 1229.6,823.0 1240.6,824.6 1251.7,822.6 1262.8,827.2 1273.9,820.4 1284.9,824.1 1296.0,825.8 1307.1,824.3 1318.2,826.7 1329.3,820.5 1340.3,831.2 1351.4,825.1 1362.5,824.7 1373.6,825.3 1384.6,820.9 1395.7,825.7 1406.8,822.0 1417.9,823.0 1428.9,824.4 1440.0,827.2 1451.1,823.2 1462.2,824.8 1473.2,826.4 1484.3,831.9 1495.4,824.7 1506.5,825.5 1517.5,821.0 1528.6,825.9 1539.7,823.3 1550.8,823.6 1561.8,825.4 1572.9,822.4 1584.0,821.7 1595.1,826.1 1606.1,821.5 1617.2,825.6 1628.3,825.5 1639.4,825.2 1650.4,823.2 1661.5,818.8 1672.6,824.8 1683.7,821.7 1694.7,822.3 1705.8,822.5 1716.9,825.3 1728.0,823.4 1739.1,821.1 1750.1,826.1 1761.2,825.2 1772.3,821.9 1783.4,827.5 1794.4,824.2 1805.5,826.4 1816.6,822.4 1827.7,825.7 1838.7,825.6 1849.8,827.9 1860.9,825.6 1872.0,823.2 1883.0,823.7 1894.1,824.9 1905.2,828.3 1916.3,822.8 1927.3,821.5 1938.4,823.7 1949.5,822.0 1960.6,822.7 1971.6,826.6 1982.7,823.9 1993.8,823.8 2004.9,821.6 2015.9,829.9 2027.0,829.1 2038.1,826.7 2049.2,823.7 2060.2,824.2 2071.3,825.0 2082.4,825.0 2093.5,823.8 2104.5,822.8 2115.6,821.7 2126.7,825.0 2137.8,824.0 2148.9,823.6 2159.9,822.4 2171.0,822.7 2182.1,823.2 2193.2,822.4 2204.2,821.4 2215.3,825.4 2226.4,823.9 2237.5,822.0 2248.5,822.1 2259.6,826.3 2270.7,823.2 2281.8,825.2 2292.8,824.5 2303.9,824.5 2315.0,823.4 2326.1,819.5 2337.1,824.6 2348.2,824.2 2359.3,824.0 2370.4,822.5 2381.4,827.1 2392.5,824.1 2403.6,825.5 2414.7,826.1 2425.7,821.5 2436.8,827.0 2447.9,824.2 2459.0,822.1 2470.0,822.8 2481.1,822.2 2492.2,823.0 2503.3,822.4 2514.4,819.3 2525.4,826.6 2536.5,827.9 2547.6,829.6 2558.7,822.7 2569.7,825.4 2580.8,824.3 2591.9,823.1 2603.0,821.2 2614.0,822.8 2625.1,822.0 2636.2,824.1 2647.3,826.0 2658.3,821.9 2669.4,823.7 2680.5,822.1 2691.6,825.6 2702.6,825.3 2713.7,824.9 2724.8,828.8 2735.9,828.2 2746.9,823.5 2758.0,824.2 2769.1,822.5 2780.2,822.3 2791.2,822.7 2802.3,823.0 2813.4,823.1 2824.5,825.2 2835.5,823.4 2846.6,822.2 2857.7,826.5 2868.8,824.7 2879.8,823.2 2890.9,824.7 2902.0,825.7" fill="none" stroke="#3a3a7a" stroke-width="3.5" stroke-linejoin="round" opacity="1.0"/><polyline points="122.0,824.5 133.1,821.5 144.2,821.7 155.2,819.7 166.3,822.4 177.4,822.9 188.5,821.9 199.5,822.9 210.6,824.6 221.7,824.0 232.8,821.9 243.8,822.8 254.9,825.0 266.0,824.6 277.1,823.3 288.1,820.9 299.2,820.8 310.3,830.5 321.4,823.6 332.4,822.6 343.5,820.5 354.6,825.8 365.7,825.6 376.7,824.1 387.8,822.6 398.9,823.6 410.0,822.7 421.0,822.9 432.1,821.2 443.2,820.8 454.3,823.8 465.3,824.1 476.4,823.0 487.5,822.8 498.6,823.8 509.6,824.6 520.7,821.3 531.8,822.7 542.9,823.0 554.0,819.2 565.0,825.7 576.1,823.9 587.2,821.0 598.3,823.3 609.3,822.6 620.4,821.8 631.5,824.8 642.6,822.2 653.6,824.2 664.7,821.9 675.8,823.0 686.9,823.0 697.9,820.2 709.0,820.3 720.1,825.5 731.2,819.3 742.2,829.8 753.3,822.4 764.4,822.6 775.5,820.5 786.5,824.9 797.6,823.2 808.7,820.5 819.8,835.4 830.8,820.0 841.9,821.8 853.0,825.3 864.1,822.0 875.1,822.6 886.2,824.2 897.3,822.5 908.4,823.8 919.5,822.2 930.5,822.9 941.6,821.0 952.7,821.9 963.8,820.9 974.8,823.0 985.9,821.0 997.0,823.9 1008.1,823.3 1019.1,822.1 1030.2,818.6 1041.3,821.2 1052.4,821.9 1063.4,818.0 1074.5,827.6 1085.6,825.6 1096.7,821.5 1107.7,822.0 1118.8,819.4 1129.9,822.2 1141.0,823.8 1152.0,822.5 1163.1,822.7 1174.2,820.9 1185.3,820.3 1196.3,826.2 1207.4,822.1 1218.5,822.8 1229.6,821.5 1240.6,823.1 1251.7,824.6 1262.8,826.5 1273.9,824.3 1284.9,823.0 1296.0,825.2 1307.1,824.2 1318.2,820.8 1329.3,824.6 1340.3,821.2 1351.4,826.0 1362.5,822.9 1373.6,824.2 1384.6,821.4 1395.7,822.1 1406.8,820.8 1417.9,825.3 1428.9,825.0 1440.0,826.4 1451.1,829.9 1462.2,824.6 1473.2,821.2 1484.3,823.0 1495.4,822.9 1506.5,821.5 1517.5,820.9 1528.6,823.8 1539.7,824.5 1550.8,823.5 1561.8,825.1 1572.9,824.1 1584.0,824.7 1595.1,823.5 1606.1,822.7 1617.2,818.0 1628.3,820.9 1639.4,820.3 1650.4,824.9 1661.5,824.0 1672.6,822.7 1683.7,821.6 1694.7,822.4 1705.8,824.0 1716.9,822.6 1728.0,821.7 1739.1,823.3 1750.1,822.0 1761.2,822.7 1772.3,822.7 1783.4,822.5 1794.4,822.1 1805.5,823.4 1816.6,820.8 1827.7,821.3 1838.7,819.9 1849.8,823.7 1860.9,819.9 1872.0,824.5 1883.0,821.8 1894.1,822.0 1905.2,824.6 1916.3,821.6 1927.3,818.2 1938.4,821.9 1949.5,820.0 1960.6,814.3 1971.6,820.5 1982.7,822.5 1993.8,821.5 2004.9,823.3 2015.9,823.7 2027.0,823.1 2038.1,821.9 2049.2,823.7 2060.2,823.1 2071.3,821.8 2082.4,822.9 2093.5,820.6 2104.5,819.1 2115.6,822.5 2126.7,818.1 2137.8,822.6 2148.9,824.1 2159.9,822.5 2171.0,820.2 2182.1,822.1 2193.2,826.7 2204.2,824.9 2215.3,819.4 2226.4,824.6 2237.5,817.3 2248.5,844.5 2259.6,823.9 2270.7,823.0 2281.8,822.0 2292.8,821.1 2303.9,823.1 2315.0,822.5 2326.1,818.7 2337.1,821.2 2348.2,829.9 2359.3,822.5 2370.4,835.4 2381.4,824.4 2392.5,820.0 2403.6,825.4 2414.7,820.6 2425.7,820.7 2436.8,824.0 2447.9,823.3 2459.0,821.2 2470.0,819.6 2481.1,822.7 2492.2,823.5 2503.3,821.0 2514.4,821.3 2525.4,823.8 2536.5,824.2 2547.6,822.5 2558.7,826.8 2569.7,824.9 2580.8,827.0 2591.9,824.8 2603.0,825.4 2614.0,817.0 2625.1,824.3 2636.2,822.7 2647.3,822.2 2658.3,823.0 2669.4,822.9 2680.5,823.5 2691.6,821.3 2702.6,823.4 2713.7,818.8 2724.8,823.4 2735.9,822.6 2746.9,824.5 2758.0,821.0 2769.1,823.4 2780.2,822.7 2791.2,822.0 2802.3,819.2 2813.4,821.2 2824.5,819.1 2835.5,821.1 2846.6,821.1 2857.7,822.6 2868.8,821.8 2879.8,819.7 2890.9,822.2 2902.0,823.2" fill="none" stroke="#4a10c0" stroke-width="3.5" stroke-linejoin="round" opacity="1.0"/><polyline points="122.0,776.9 133.1,776.9 144.2,776.9 155.2,776.9 166.3,776.9 177.4,776.9 188.5,776.9 199.5,776.9 210.6,776.9 221.7,776.9 232.8,776.9 243.8,776.9 254.9,776.9 266.0,776.9 277.1,776.9 288.1,776.9 299.2,776.9 310.3,776.9 321.4,776.9 332.4,776.9 343.5,776.9 354.6,776.9 365.7,776.9 376.7,776.9 387.8,776.9 398.9,776.9 410.0,776.9 421.0,776.9 432.1,776.9 443.2,776.9 454.3,776.9 465.3,776.9 476.4,776.9 487.5,776.9 498.6,776.9 509.6,776.9 520.7,776.9 531.8,776.9 542.9,776.9 554.0,776.9 565.0,776.9 576.1,776.9 587.2,776.9 598.3,776.9 609.3,776.9 620.4,776.9 631.5,776.9 642.6,776.9 653.6,776.9 664.7,776.9 675.8,776.9 686.9,776.9 697.9,776.9 709.0,776.9 720.1,776.9 731.2,776.9 742.2,776.9 753.3,776.9 764.4,776.9 775.5,776.9 786.5,776.9 797.6,776.9 808.7,776.9 819.8,776.9 830.8,776.9 841.9,776.9 853.0,776.9 864.1,776.9 875.1,776.9 886.2,776.9 897.3,776.9 908.4,776.9 919.5,776.9 930.5,776.9 941.6,776.9 952.7,776.9 963.8,776.9 974.8,776.9 985.9,776.9 997.0,776.9 1008.1,776.9 1019.1,776.9 1030.2,776.9 1041.3,776.9 1052.4,776.9 1063.4,776.9 1074.5,776.9 1085.6,776.9 1096.7,776.9 1107.7,776.9 1118.8,776.9 1129.9,776.9 1141.0,776.9 1152.0,776.9 1163.1,776.9 1174.2,776.9 1185.3,776.9 1196.3,776.9 1207.4,776.9 1218.5,776.9 1229.6,776.9 1240.6,776.9 1251.7,776.9 1262.8,776.9 1273.9,776.9 1284.9,776.9 1296.0,776.9 1307.1,776.9 1318.2,776.9 1329.3,776.9 1340.3,776.9 1351.4,776.9 1362.5,776.9 1373.6,776.9 1384.6,776.9 1395.7,776.9 1406.8,776.9 1417.9,776.9 1428.9,776.9 1440.0,776.9 1451.1,776.9 1462.2,776.9 1473.2,776.9 1484.3,776.9 1495.4,776.9 1506.5,776.9 1517.5,776.9 1528.6,776.9 1539.7,776.9 1550.8,776.9 1561.8,776.9 1572.9,776.9 1584.0,776.9 1595.1,776.9 1606.1,776.9 1617.2,776.9 1628.3,776.9 1639.4,776.9 1650.4,776.9 1661.5,776.9 1672.6,776.9 1683.7,776.9 1694.7,776.9 1705.8,776.9 1716.9,776.9 1728.0,776.9 1739.1,776.9 1750.1,776.9 1761.2,776.9 1772.3,776.9 1783.4,776.9 1794.4,776.9 1805.5,776.9 1816.6,776.9 1827.7,776.9 1838.7,776.9 1849.8,776.9 1860.9,776.9 1872.0,776.9 1883.0,776.9 1894.1,776.9 1905.2,776.9 1916.3,776.9 1927.3,776.9 1938.4,776.9 1949.5,776.9 1960.6,776.9 1971.6,776.9 1982.7,776.9 1993.8,776.9 2004.9,776.9 2015.9,776.9 2027.0,776.9 2038.1,776.9 2049.2,776.9 2060.2,776.9 2071.3,776.9 2082.4,776.9 2093.5,776.9 2104.5,776.9 2115.6,776.9 2126.7,776.9 2137.8,776.9 2148.9,776.9 2159.9,776.9 2171.0,776.9 2182.1,776.9 2193.2,776.9 2204.2,776.9 2215.3,776.9 2226.4,776.9 2237.5,776.9 2248.5,776.9 2259.6,776.9 2270.7,776.9 2281.8,776.9 2292.8,776.9 2303.9,776.9 2315.0,776.9 2326.1,776.9 2337.1,776.9 2348.2,776.9 2359.3,776.9 2370.4,776.9 2381.4,776.9 2392.5,776.9 2403.6,776.9 2414.7,776.9 2425.7,776.9 2436.8,776.9 2447.9,776.9 2459.0,776.9 2470.0,776.9 2481.1,776.9 2492.2,776.9 2503.3,776.9 2514.4,776.9 2525.4,776.9 2536.5,776.9 2547.6,776.9 2558.7,776.9 2569.7,776.9 2580.8,776.9 2591.9,776.9 2603.0,776.9 2614.0,776.9 2625.1,776.9 2636.2,776.9 2647.3,776.9 2658.3,776.9 2669.4,776.9 2680.5,776.9 2691.6,776.9 2702.6,776.9 2713.7,776.9 2724.8,776.9 2735.9,776.9 2746.9,776.9 2758.0,776.9 2769.1,776.9 2780.2,776.9 2791.2,776.9 2802.3,776.9 2813.4,776.9 2824.5,776.9 2835.5,776.9 2846.6,776.9 2857.7,776.9 2868.8,776.9 2879.8,776.9 2890.9,776.9 2902.0,776.9" fill="none" stroke="#3c3cb8" stroke-width="3.5" stroke-linejoin="round" opacity="1.0"/><line x1="2037" x2="2037" y1="535" y2="1381" stroke="rgba(200,200,200,0.85)" stroke-width="2"/><line x1="122.0" x2="2902.0" y1="1006" y2="1006" stroke="rgba(200,200,200,0.85)" stroke-width="2"/><circle cx="2026.5" cy="1011.1" r="5" fill="none" stroke="#9cc99c" stroke-width="2.5"/><rect x="120.5" y="533.5" width="2783" height="849" fill="none" stroke="#545454" stroke-width="3"/></svg><div style="position:absolute;left:2055px;top:1042px;width:459px;height:207px;box-sizing:border-box;background:rgba(0,0,0,0.8);border-radius:6px;z-index:6"></div><div style="position:absolute;left:2069px;top:1094px;width:18px;height:17px;box-sizing:border-box;background:#3a8a28;z-index:7"></div><div style="position:absolute;left:159px;top:1474.2px;width:19px;height:19.0px;box-sizing:border-box;background:#3c8a28;border:3px solid #d0d0d0"></div><div style="position:absolute;left:159px;top:1510.8600000000001px;width:19px;height:19.0px;box-sizing:border-box;background:#3a7a8a;border:3px solid #d0d0d0"></div><div style="position:absolute;left:159px;top:1547.52px;width:19px;height:19.0px;box-sizing:border-box;background:#7a2e18;border:3px solid #d0d0d0"></div><div style="position:absolute;left:159px;top:1584.18px;width:19px;height:19.0px;box-sizing:border-box;background:#6a2a9a;border:3px solid #d0d0d0"></div><div style="position:absolute;left:159px;top:1620.8400000000001px;width:19px;height:19.0px;box-sizing:border-box;background:#7a9a30;border:3px solid #d0d0d0"></div><div style="position:absolute;left:159px;top:1657.5px;width:19px;height:19.0px;box-sizing:border-box;background:#888888;border:3px solid #d0d0d0"></div>
<div id="t0" style="position:absolute;left:91.03px;top:28.71px;font-size:38px;line-height:42.45px;color:#fff;font-family:'Liberation Sans', sans-serif;font-weight:normal;white-space:nowrap;z-index:5;transform:scaleX(0.9335);transform-origin:0 0;">Thanos - Query</div><div id="t1" style="position:absolute;left:381.01px;top:36.30px;font-size:29.5px;line-height:32.95px;color:#9a9da0;font-family:'Liberation Sans', sans-serif;font-weight:normal;white-space:nowrap;z-index:5;transform:scaleX(0.9873);transform-origin:0 0;">Graph</div><div id="t2" style="position:absolute;left:490.01px;top:36.30px;font-size:29.5px;line-height:32.95px;color:#9a9da0;font-family:'Liberation Sans', sans-serif;font-weight:normal;white-space:nowrap;z-index:5;transform:scaleX(0.9940);transform-origin:0 0;">Stores</div><div id="t3" style="position:absolute;left:603.01px;top:36.30px;font-size:29.5px;line-height:32.95px;color:#9a9da0;font-family:'Liberation Sans', sans-serif;font-weight:normal;white-space:nowrap;z-index:5;transform:scaleX(0.9939);transform-origin:0 0;">Status</div><div id="t4" style="position:absolute;left:737.96px;top:36.30px;font-size:29.5px;line-height:32.95px;color:#9a9da0;font-family:'Liberation Sans', sans-serif;font-weight:normal;white-space:nowrap;z-index:5;transform:scaleX(1.0175);transform-origin:0 0;">Help</div><div id="t5" style="position:absolute;left:59.03px;top:126.65px;font-size:30px;line-height:33.51px;color:#212529;font-family:'Liberation Sans', sans-serif;font-weight:normal;white-space:nowrap;z-index:5;transform:scaleX(0.9838);transform-origin:0 0;">Use local time</div><div id="t6" style="position:absolute;left:322.04px;top:126.65px;font-size:30px;line-height:33.51px;color:#212529;font-family:'Liberation Sans', sans-serif;font-weight:normal;white-space:nowrap;z-index:5;transform:scaleX(0.9779);transform-origin:0 0;">Enable query history</div><div id="t7" style="position:absolute;left:668.07px;top:126.65px;font-size:30px;line-height:33.51px;color:#212529;font-family:'Liberation Sans', sans-serif;font-weight:normal;white-space:nowrap;z-index:5;transform:scaleX(0.9670);transform-origin:0 0;">Enable Store Filtering</div><div id="t8" style="position:absolute;left:2114.05px;top:126.65px;font-size:30px;line-height:33.51px;color:#34588c;font-family:'Liberation Sans', sans-serif;font-weight:normal;white-space:nowrap;z-index:5;transform:scaleX(0.9749);transform-origin:0 0;">Enable autocomplete</div><div id="t9" style="position:absolute;left:2468.04px;top:126.65px;font-size:30px;line-height:33.51px;color:#34588c;font-family:'Liberation Sans', sans-serif;font-weight:normal;white-space:nowrap;z-index:5;transform:scaleX(0.9800);transform-origin:0 0;">Enable highlighting</div><div id="t10" style="position:absolute;left:2795.06px;top:126.65px;font-size:30px;line-height:33.51px;color:#34588c;font-family:'Liberation Sans', sans-serif;font-weight:normal;white-space:nowrap;z-index:5;transform:scaleX(0.9695);transform-origin:0 0;">Enable linter</div><div id="t11" style="position:absolute;left:110.16px;top:214.32px;font-size:27px;line-height:30.59px;color:#212529;font-family:'Liberation Mono', monospace;font-weight:normal;white-space:nowrap;z-index:5;transform:scaleX(1.0125);transform-origin:0 0;">node_cpu_utilization</div><div id="t12" style="position:absolute;left:2829.15px;top:210.44px;font-size:31px;line-height:34.63px;color:#fff;font-family:'Liberation Sans', sans-serif;font-weight:normal;white-space:nowrap;z-index:5;transform:scaleX(0.9266);transform-origin:0 0;">Execute</div><div id="t13" style="position:absolute;left:95.03px;top:288.85px;font-size:30px;line-height:33.51px;color:#34588c;font-family:'Liberation Sans', sans-serif;font-weight:normal;white-space:nowrap;z-index:5;transform:scaleX(0.9875);transform-origin:0 0;">Use Deduplication</div><div id="t14" style="position:absolute;left:412.29px;top:288.85px;font-size:30px;line-height:33.51px;color:#212529;font-family:'Liberation Sans', sans-serif;font-weight:normal;white-space:nowrap;z-index:5;transform:scaleX(0.9594);transform-origin:0 0;">Use Partial Response</div><div id="t15" style="position:absolute;left:706.08px;top:288.85px;font-size:30px;line-height:33.51px;color:#212529;font-family:'Liberation Sans', sans-serif;font-weight:normal;white-space:nowrap;z-index:5;transform:scaleX(0.9700);transform-origin:0 0;">Engine</div><div id="t16" style="position:absolute;left:835.53px;top:291.16px;font-size:28px;line-height:31.28px;color:#495057;font-family:'Liberation Sans', sans-serif;font-weight:normal;white-space:nowrap;z-index:5;transform:scaleX(0.9378);transform-origin:0 0;">Prometheus</div><div id="t17" style="position:absolute;left:2827.08px;top:284.35px;font-size:30px;line-height:33.51px;color:#6c757d;font-family:'Liberation Sans', sans-serif;font-weight:normal;white-space:nowrap;z-index:5;transform:scaleX(0.9579);transform-origin:0 0;">Explain</div><div id="t18" style="position:absolute;left:2423.27px;top:357.19px;font-size:23px;line-height:25.69px;color:#6c757d;font-family:'Liberation Sans', sans-serif;font-weight:normal;white-space:nowrap;z-index:5;transform:scaleX(0.9470);transform-origin:0 0;">Load time: 354ms</div><div id="t19" style="position:absolute;left:2617.15px;top:357.19px;font-size:23px;line-height:25.69px;color:#6c757d;font-family:'Liberation Sans', sans-serif;font-weight:normal;white-space:nowrap;z-index:5;transform:scaleX(0.9256);transform-origin:0 0;">Resolution: 172s</div><div id="t20" style="position:absolute;left:2795.27px;top:357.19px;font-size:23px;line-height:25.69px;color:#6c757d;font-family:'Liberation Sans', sans-serif;font-weight:normal;white-space:nowrap;z-index:5;transform:scaleX(0.9432);transform-origin:0 0;">Result series: 56</div><div id="t21" style="position:absolute;left:46.00px;top:377.85px;font-size:30px;line-height:33.51px;color:#2f7cf6;font-family:'Liberation Sans', sans-serif;font-weight:normal;white-space:nowrap;z-index:5;">Table</div><div id="t22" style="position:absolute;left:175.02px;top:377.85px;font-size:30px;line-height:33.51px;color:#495057;font-family:'Liberation Sans', sans-serif;font-weight:normal;white-space:nowrap;z-index:5;transform:scaleX(0.9753);transform-origin:0 0;">Graph</div><div id="t23" style="position:absolute;left:119.42px;top:459.16px;font-size:28px;line-height:31.28px;color:#495057;font-family:'Liberation Sans', sans-serif;font-weight:normal;white-space:nowrap;z-index:5;transform:scaleX(0.9070);transform-origin:0 0;">12h</div><div id="t24" style="position:absolute;left:474.75px;top:459.16px;font-size:28px;line-height:31.28px;color:#6c757d;font-family:'Liberation Sans', sans-serif;font-weight:normal;white-space:nowrap;z-index:5;transform:scaleX(0.9290);transform-origin:0 0;">End time</div><div id="t25" style="position:absolute;left:840.16px;top:459.16px;font-size:28px;line-height:31.28px;color:#6c757d;font-family:'Liberation Sans', sans-serif;font-weight:normal;white-space:nowrap;z-index:5;transform:scaleX(0.9223);transform-origin:0 0;">Res. (s)</div><div id="t26" style="position:absolute;left:1183.70px;top:459.16px;font-size:28px;line-height:31.28px;color:#343a40;font-family:'Liberation Sans', sans-serif;font-weight:normal;white-space:nowrap;z-index:5;transform:scaleX(0.9180);transform-origin:0 0;">Only raw data</div><div id="t27" style="position:absolute;right:2875.00px;top:1368.20px;font-size:20px;line-height:22.34px;color:#545454;font-family:'Liberation Sans', sans-serif;font-weight:normal;white-space:nowrap;z-index:5;">0.00</div><div id="t28" style="position:absolute;right:2875.00px;top:1247.52px;font-size:20px;line-height:22.34px;color:#545454;font-family:'Liberation Sans', sans-serif;font-weight:normal;white-space:nowrap;z-index:5;">20.00</div><div id="t29" style="position:absolute;right:2875.00px;top:1126.84px;font-size:20px;line-height:22.34px;color:#545454;font-family:'Liberation Sans', sans-serif;font-weight:normal;white-space:nowrap;z-index:5;">40.00</div><div id="t30" style="position:absolute;right:2875.00px;top:1006.16px;font-size:20px;line-height:22.34px;color:#545454;font-family:'Liberation Sans', sans-serif;font-weight:normal;white-space:nowrap;z-index:5;">60.00</div><div id="t31" style="position:absolute;right:2875.00px;top:885.48px;font-size:20px;line-height:22.34px;color:#545454;font-family:'Liberation Sans', sans-serif;font-weight:normal;white-space:nowrap;z-index:5;">80.00</div><div id="t32" style="position:absolute;right:2875.00px;top:764.80px;font-size:20px;line-height:22.34px;color:#545454;font-family:'Liberation Sans', sans-serif;font-weight:normal;white-space:nowrap;z-index:5;">100.00</div><div id="t33" style="position:absolute;right:2875.00px;top:644.12px;font-size:20px;line-height:22.34px;color:#545454;font-family:'Liberation Sans', sans-serif;font-weight:normal;white-space:nowrap;z-index:5;">120.00</div><div id="t34" style="position:absolute;right:2875.00px;top:523.44px;font-size:20px;line-height:22.34px;color:#545454;font-family:'Liberation Sans', sans-serif;font-weight:normal;white-space:nowrap;z-index:5;">140.00</div><div id="t35" style="position:absolute;left:316.07px;top:1392.05px;font-size:19.5px;line-height:21.78px;color:#545454;font-family:'Liberation Sans', sans-serif;font-weight:normal;white-space:nowrap;z-index:5;transform:scaleX(1.0851);transform-origin:0 0;">19:00</div><div id="t36" style="position:absolute;left:548.38px;top:1392.05px;font-size:19.5px;line-height:21.78px;color:#545454;font-family:'Liberation Sans', sans-serif;font-weight:normal;white-space:nowrap;z-index:5;transform:scaleX(1.0851);transform-origin:0 0;">20:00</div><div id="t37" style="position:absolute;left:779.62px;top:1392.05px;font-size:19.5px;line-height:21.78px;color:#545454;font-family:'Liberation Sans', sans-serif;font-weight:normal;white-space:nowrap;z-index:5;transform:scaleX(1.0851);transform-origin:0 0;">21:00</div><div id="t38" style="position:absolute;left:1011.94px;top:1392.05px;font-size:19.5px;line-height:21.78px;color:#545454;font-family:'Liberation Sans', sans-serif;font-weight:normal;white-space:nowrap;z-index:5;transform:scaleX(1.0625);transform-origin:0 0;">22:00</div><div id="t39" style="position:absolute;left:1243.15px;top:1392.05px;font-size:19.5px;line-height:21.78px;color:#545454;font-family:'Liberation Sans', sans-serif;font-weight:normal;white-space:nowrap;z-index:5;transform:scaleX(1.0851);transform-origin:0 0;">23:00</div><div id="t40" style="position:absolute;left:1475.48px;top:1392.05px;font-size:19.5px;line-height:21.78px;color:#545454;font-family:'Liberation Sans', sans-serif;font-weight:normal;white-space:nowrap;z-index:5;transform:scaleX(1.0625);transform-origin:0 0;">00:00</div><div id="t41" style="position:absolute;left:1706.70px;top:1392.05px;font-size:19.5px;line-height:21.78px;color:#545454;font-family:'Liberation Sans', sans-serif;font-weight:normal;white-space:nowrap;z-index:5;transform:scaleX(1.0851);transform-origin:0 0;">01:00</div><div id="t42" style="position:absolute;left:1937.92px;top:1392.05px;font-size:19.5px;line-height:21.78px;color:#545454;font-family:'Liberation Sans', sans-serif;font-weight:normal;white-space:nowrap;z-index:5;transform:scaleX(1.0851);transform-origin:0 0;">02:00</div><div id="t43" style="position:absolute;left:2170.24px;top:1392.05px;font-size:19.5px;line-height:21.78px;color:#545454;font-family:'Liberation Sans', sans-serif;font-weight:normal;white-space:nowrap;z-index:5;transform:scaleX(1.0625);transform-origin:0 0;">03:00</div><div id="t44" style="position:absolute;left:2401.47px;top:1392.05px;font-size:19.5px;line-height:21.78px;color:#545454;font-family:'Liberation Sans', sans-serif;font-weight:normal;white-space:nowrap;z-index:5;transform:scaleX(1.0851);transform-origin:0 0;">04:00</div><div id="t45" style="position:absolute;left:2632.70px;top:1392.05px;font-size:19.5px;line-height:21.78px;color:#545454;font-family:'Liberation Sans', sans-serif;font-weight:normal;white-space:nowrap;z-index:5;transform:scaleX(1.0851);transform-origin:0 0;">05:00</div><div id="t46" style="position:absolute;left:2865.02px;top:1392.05px;font-size:19.5px;line-height:21.78px;color:#545454;font-family:'Liberation Sans', sans-serif;font-weight:normal;white-space:nowrap;z-index:5;transform:scaleX(1.0625);transform-origin:0 0;">06:00</div><div id="t47" style="position:absolute;left:2067.56px;top:1058.99px;font-size:21px;line-height:23.46px;color:#fff;font-family:'Liberation Sans', sans-serif;font-weight:normal;white-space:nowrap;z-index:7;transform:scaleX(1.0332);transform-origin:0 0;">2024-09-11 02:16:03 +00:00</div><div id="t48" style="position:absolute;left:2091.56px;top:1092.39px;font-size:21px;line-height:23.46px;color:#fff;font-family:'Liberation Sans', sans-serif;font-weight:normal;white-space:nowrap;z-index:7;transform:scaleX(1.0310);transform-origin:0 0;">node_cpu_utilization: <b>61.18833333310128</b></div><div id="t49" style="position:absolute;left:2068.59px;top:1126.11px;font-size:19px;line-height:21.22px;color:#fff;font-family:'Liberation Sans', sans-serif;font-weight:normal;white-space:nowrap;z-index:7;transform:scaleX(1.0423);transform-origin:0 0;"><b>ecms_cluster_id</b>: opfybj54wvgtkqve</div><div id="t50" style="position:absolute;left:2067.54px;top:1152.81px;font-size:19px;line-height:21.22px;color:#fff;font-family:'Liberation Sans', sans-serif;font-weight:normal;white-space:nowrap;z-index:7;transform:scaleX(1.0455);transform-origin:0 0;"><b>host_ip</b>: 10.10.1.4</div><div id="t51" style="position:absolute;left:2067.53px;top:1180.40px;font-size:19px;line-height:21.22px;color:#fff;font-family:'Liberation Sans', sans-serif;font-weight:normal;white-space:nowrap;z-index:7;transform:scaleX(1.0551);transform-origin:0 0;"><b>mode</b>: idle</div><div id="t52" style="position:absolute;left:2067.54px;top:1207.21px;font-size:19px;line-height:21.22px;color:#fff;font-family:'Liberation Sans', sans-serif;font-weight:normal;white-space:nowrap;z-index:7;transform:scaleX(1.0462);transform-origin:0 0;"><b>node_name</b>: node-1</div><div id="t53" style="position:absolute;left:188.33px;top:1471.54px;font-size:22.5px;line-height:25.13px;color:#212529;font-family:'Liberation Sans', sans-serif;font-weight:normal;white-space:nowrap;z-index:5;transform:scaleX(1.0291);transform-origin:0 0;">node_cpu_utilization{<b>ecms_cluster_id</b>="opfybj54wvgtkqve", <b>host_ip</b>="10.10.1.4", <b>mode</b>="idle", <b>node_name</b>="node-1"}</div><div id="t54" style="position:absolute;left:188.34px;top:1508.20px;font-size:22.5px;line-height:25.13px;color:#212529;font-family:'Liberation Sans', sans-serif;font-weight:normal;white-space:nowrap;z-index:5;transform:scaleX(1.0284);transform-origin:0 0;">node_cpu_utilization{<b>ecms_cluster_id</b>="opfybj54wvgtkqve", <b>host_ip</b>="10.10.1.4", <b>mode</b>="iowait", <b>node_name</b>="node-1"}</div><div id="t55" style="position:absolute;left:188.33px;top:1544.86px;font-size:22.5px;line-height:25.13px;color:#212529;font-family:'Liberation Sans', sans-serif;font-weight:normal;white-space:nowrap;z-index:5;transform:scaleX(1.0295);transform-origin:0 0;">node_cpu_utilization{<b>ecms_cluster_id</b>="opfybj54wvgtkqve", <b>host_ip</b>="10.10.1.4", <b>mode</b>="irq", <b>node_name</b>="node-1"}</div><div id="t56" style="position:absolute;left:188.33px;top:1581.52px;font-size:22.5px;line-height:25.13px;color:#212529;font-family:'Liberation Sans', sans-serif;font-weight:normal;white-space:nowrap;z-index:5;transform:scaleX(1.0291);transform-origin:0 0;">node_cpu_utilization{<b>ecms_cluster_id</b>="opfybj54wvgtkqve", <b>host_ip</b>="10.10.1.4", <b>mode</b>="nice", <b>node_name</b>="node-1"}</div><div id="t57" style="position:absolute;left:188.33px;top:1618.18px;font-size:22.5px;line-height:25.13px;color:#212529;font-family:'Liberation Sans', sans-serif;font-weight:normal;white-space:nowrap;z-index:5;transform:scaleX(1.0316);transform-origin:0 0;">node_cpu_utilization{<b>ecms_cluster_id</b>="opfybj54wvgtkqve", <b>host_ip</b>="10.10.1.4", <b>mode</b>="softirq", <b>node_name</b>="node-1"}</div><div id="t58" style="position:absolute;left:188.34px;top:1654.84px;font-size:22.5px;line-height:25.13px;color:#212529;font-family:'Liberation Sans', sans-serif;font-weight:normal;white-space:nowrap;z-index:5;transform:scaleX(1.0277);transform-origin:0 0;">node_cpu_utilization{<b>ecms_cluster_id</b>="opfybj54wvgtkqve", <b>host_ip</b>="10.10.1.4", <b>mode</b>="steal", <b>node_name</b>="node-1"}</div>
</body></html>
